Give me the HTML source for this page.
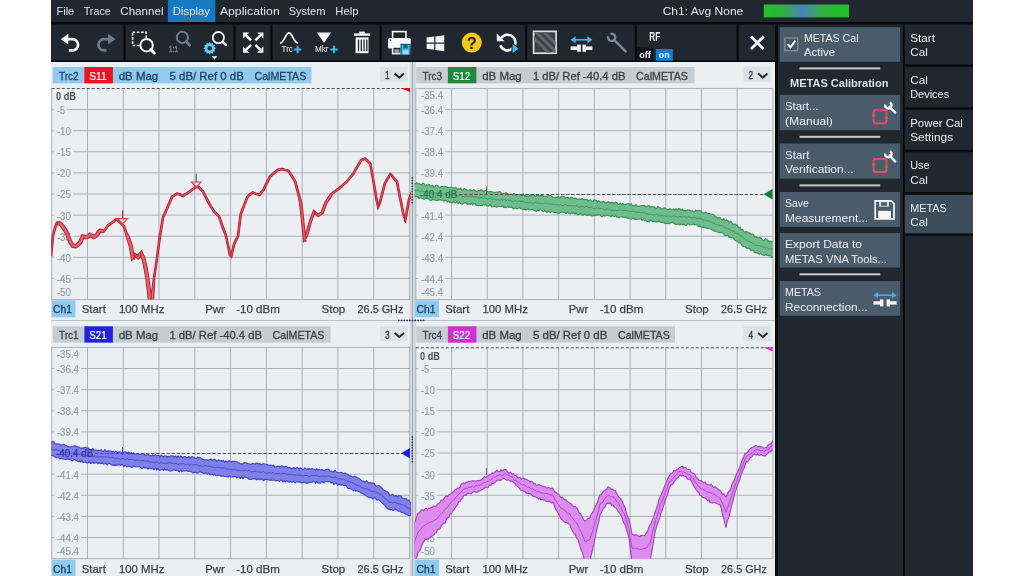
<!DOCTYPE html>
<html><head><meta charset="utf-8"><title>VNA METAS Cal</title>
<style>
html,body{margin:0;padding:0;background:#fff;width:1024px;height:576px;overflow:hidden;}
svg{display:block;font-family:"Liberation Sans", sans-serif;will-change:transform;}
</style></head><body>
<svg width="1024" height="576" viewBox="0 0 1024 576">
<rect x="51.00" y="0.00" width="922.00" height="576.00" fill="#20272e" />
<rect x="167.90" y="0.00" width="47.40" height="22.00" fill="#1878c0" />
<text x="56.60" y="15.40" font-size="11.5" fill="#e4e6e8" textLength="17.60" lengthAdjust="spacingAndGlyphs" >File</text>
<text x="83.70" y="15.40" font-size="11.5" fill="#e4e6e8" textLength="27.10" lengthAdjust="spacingAndGlyphs" >Trace</text>
<text x="120.30" y="15.40" font-size="11.5" fill="#e4e6e8" textLength="43.20" lengthAdjust="spacingAndGlyphs" >Channel</text>
<text x="172.80" y="15.40" font-size="11.5" fill="#e4e6e8" textLength="37.10" lengthAdjust="spacingAndGlyphs" >Display</text>
<text x="219.90" y="15.40" font-size="11.5" fill="#e4e6e8" textLength="59.80" lengthAdjust="spacingAndGlyphs" >Application</text>
<text x="288.80" y="15.40" font-size="11.5" fill="#e4e6e8" textLength="36.50" lengthAdjust="spacingAndGlyphs" >System</text>
<text x="335.30" y="15.40" font-size="11.5" fill="#e4e6e8" textLength="23.20" lengthAdjust="spacingAndGlyphs" >Help</text>
<text x="662.70" y="15.40" font-size="11.5" fill="#e4e6e8" textLength="80.60" lengthAdjust="spacingAndGlyphs" >Ch1: Avg None</text>
<defs><linearGradient id="gbar" x1="0" x2="1" y1="0" y2="0"><stop offset="0" stop-color="#22c02a"/><stop offset="0.22" stop-color="#2fb040"/><stop offset="0.45" stop-color="#4a84b8"/><stop offset="0.7" stop-color="#32b040"/><stop offset="1" stop-color="#20c020"/></linearGradient><clipPath id="cTL"><rect x="51" y="88" width="360" height="211.5"/></clipPath><clipPath id="cTR"><rect x="414.5" y="88" width="358.5" height="211.5"/></clipPath><clipPath id="cBL"><rect x="51" y="347.3" width="360" height="211.5"/></clipPath><clipPath id="cBR"><rect x="414.5" y="347.3" width="358.5" height="211.5"/></clipPath></defs>
<rect x="763.80" y="4.50" width="85.20" height="12.90" fill="url(#gbar)" />
<rect x="51.00" y="22.00" width="922.00" height="2.50" fill="#07090b" />
<rect x="51.00" y="60.50" width="725.00" height="1.50" fill="#07090b" />
<rect x="123.50" y="24.50" width="2.00" height="36.00" fill="#07090b" />
<rect x="233.50" y="24.50" width="2.00" height="36.00" fill="#07090b" />
<rect x="270.50" y="24.50" width="2.00" height="36.00" fill="#07090b" />
<rect x="379.70" y="24.50" width="2.00" height="36.00" fill="#07090b" />
<rect x="525.10" y="24.50" width="2.00" height="36.00" fill="#07090b" />
<rect x="634.80" y="24.50" width="2.00" height="36.00" fill="#07090b" />
<rect x="736.60" y="24.50" width="2.00" height="36.00" fill="#07090b" />
<rect x="775.00" y="24.50" width="3.00" height="551.50" fill="#07090b" />
<rect x="51.00" y="62.00" width="724.00" height="514.00" fill="#eceff2" />
<rect x="409.70" y="62.00" width="6.20" height="514.00" fill="#d3d9de" />
<line x1="412.50" y1="62.00" x2="412.50" y2="576.00" stroke="#a0a8b0" stroke-width="1" />
<line x1="51.00" y1="320.50" x2="775.00" y2="320.50" stroke="#b8c0c8" stroke-width="1" />
<rect x="52.70" y="67.00" width="258.80" height="16.30" fill="#8fcbf0" />
<rect x="84.40" y="67.00" width="28.50" height="16.30" fill="#e8161e" />
<text x="59.00" y="79.80" font-size="11.5" fill="#1e3a58" stroke="#1e3a58" stroke-width="0.3" textLength="19.60" lengthAdjust="spacingAndGlyphs" >Trc2</text>
<text x="89.20" y="79.80" font-size="11.5" fill="#ffffff" stroke="#ffffff" stroke-width="0.2" textLength="17.40" lengthAdjust="spacingAndGlyphs" >S11</text>
<text x="118.70" y="79.80" font-size="11.5" fill="#1e3a58" stroke="#1e3a58" stroke-width="0.3" textLength="39.50" lengthAdjust="spacingAndGlyphs" >dB Mag</text>
<text x="169.50" y="79.80" font-size="11.5" fill="#1e3a58" stroke="#1e3a58" stroke-width="0.3" textLength="74.30" lengthAdjust="spacingAndGlyphs" >5 dB/ Ref 0 dB</text>
<text x="254.50" y="79.80" font-size="11.5" fill="#1e3a58" stroke="#1e3a58" stroke-width="0.3" textLength="51.80" lengthAdjust="spacingAndGlyphs" >CalMETAS</text>
<rect x="379.90" y="66.70" width="27.60" height="15.10" fill="#dce2e7" />
<text x="385.10" y="79.40" font-size="11.5" fill="#3a3f44" stroke="#3a3f44" stroke-width="0.4" textLength="4.60" lengthAdjust="spacingAndGlyphs" >1</text>
<polyline points="394.6,73.6 399.3,77.6 404.0,73.6" fill="none" stroke="#25292d" stroke-width="2"/>
<rect x="416.20" y="67.00" width="278.20" height="16.30" fill="#c5ccd2" />
<rect x="447.90" y="67.00" width="28.50" height="16.30" fill="#1e8a3c" />
<text x="422.50" y="79.80" font-size="11.5" fill="#3a4046" stroke="#3a4046" stroke-width="0.3" textLength="19.60" lengthAdjust="spacingAndGlyphs" >Trc3</text>
<text x="452.70" y="79.80" font-size="11.5" fill="#ffffff" stroke="#ffffff" stroke-width="0.2" textLength="17.40" lengthAdjust="spacingAndGlyphs" >S12</text>
<text x="482.20" y="79.80" font-size="11.5" fill="#3a4046" stroke="#3a4046" stroke-width="0.3" textLength="39.50" lengthAdjust="spacingAndGlyphs" >dB Mag</text>
<text x="533.00" y="79.80" font-size="11.5" fill="#3a4046" stroke="#3a4046" stroke-width="0.3" textLength="92.40" lengthAdjust="spacingAndGlyphs" >1 dB/ Ref -40.4 dB</text>
<text x="636.10" y="79.80" font-size="11.5" fill="#3a4046" stroke="#3a4046" stroke-width="0.3" textLength="51.80" lengthAdjust="spacingAndGlyphs" >CalMETAS</text>
<rect x="743.40" y="66.70" width="27.60" height="15.10" fill="#dce2e7" />
<text x="748.60" y="79.40" font-size="11.5" fill="#3a3f44" stroke="#3a3f44" stroke-width="0.4" textLength="4.60" lengthAdjust="spacingAndGlyphs" >2</text>
<polyline points="758.1,73.6 762.8,77.6 767.5,73.6" fill="none" stroke="#25292d" stroke-width="2"/>
<rect x="52.70" y="326.30" width="277.90" height="16.30" fill="#c5ccd2" />
<rect x="84.40" y="326.30" width="28.50" height="16.30" fill="#2222dd" />
<text x="59.00" y="339.10" font-size="11.5" fill="#3a4046" stroke="#3a4046" stroke-width="0.3" textLength="19.60" lengthAdjust="spacingAndGlyphs" >Trc1</text>
<text x="89.20" y="339.10" font-size="11.5" fill="#ffffff" stroke="#ffffff" stroke-width="0.2" textLength="17.40" lengthAdjust="spacingAndGlyphs" >S21</text>
<text x="118.70" y="339.10" font-size="11.5" fill="#3a4046" stroke="#3a4046" stroke-width="0.3" textLength="39.50" lengthAdjust="spacingAndGlyphs" >dB Mag</text>
<text x="169.50" y="339.10" font-size="11.5" fill="#3a4046" stroke="#3a4046" stroke-width="0.3" textLength="92.40" lengthAdjust="spacingAndGlyphs" >1 dB/ Ref -40.4 dB</text>
<text x="272.60" y="339.10" font-size="11.5" fill="#3a4046" stroke="#3a4046" stroke-width="0.3" textLength="51.80" lengthAdjust="spacingAndGlyphs" >CalMETAS</text>
<rect x="379.90" y="326.00" width="27.60" height="15.10" fill="#dce2e7" />
<text x="385.10" y="338.70" font-size="11.5" fill="#3a3f44" stroke="#3a3f44" stroke-width="0.4" textLength="4.60" lengthAdjust="spacingAndGlyphs" >3</text>
<polyline points="394.6,332.9 399.3,336.9 404.0,332.9" fill="none" stroke="#25292d" stroke-width="2"/>
<rect x="416.20" y="326.30" width="258.80" height="16.30" fill="#c5ccd2" />
<rect x="447.90" y="326.30" width="28.50" height="16.30" fill="#d22ed8" />
<text x="422.50" y="339.10" font-size="11.5" fill="#3a4046" stroke="#3a4046" stroke-width="0.3" textLength="19.60" lengthAdjust="spacingAndGlyphs" >Trc4</text>
<text x="452.70" y="339.10" font-size="11.5" fill="#ffffff" stroke="#ffffff" stroke-width="0.2" textLength="17.40" lengthAdjust="spacingAndGlyphs" >S22</text>
<text x="482.20" y="339.10" font-size="11.5" fill="#3a4046" stroke="#3a4046" stroke-width="0.3" textLength="39.50" lengthAdjust="spacingAndGlyphs" >dB Mag</text>
<text x="533.00" y="339.10" font-size="11.5" fill="#3a4046" stroke="#3a4046" stroke-width="0.3" textLength="74.30" lengthAdjust="spacingAndGlyphs" >5 dB/ Ref 0 dB</text>
<text x="618.00" y="339.10" font-size="11.5" fill="#3a4046" stroke="#3a4046" stroke-width="0.3" textLength="51.80" lengthAdjust="spacingAndGlyphs" >CalMETAS</text>
<rect x="743.40" y="326.00" width="27.60" height="15.10" fill="#dce2e7" />
<text x="748.60" y="338.70" font-size="11.5" fill="#3a3f44" stroke="#3a3f44" stroke-width="0.4" textLength="4.60" lengthAdjust="spacingAndGlyphs" >4</text>
<polyline points="758.1,332.9 762.8,336.9 767.5,332.9" fill="none" stroke="#25292d" stroke-width="2"/>
<rect x="51.50" y="300.40" width="24.00" height="16.90" fill="#8fcbf0" />
<text x="53.00" y="313.20" font-size="11.5" fill="#1e3a58" stroke="#1e3a58" stroke-width="0.3" textLength="19.00" lengthAdjust="spacingAndGlyphs" >Ch1</text>
<text x="81.80" y="313.20" font-size="11.5" fill="#3c4248" stroke="#3c4248" stroke-width="0.25" textLength="24.00" lengthAdjust="spacingAndGlyphs" >Start</text>
<text x="119.00" y="313.20" font-size="11.5" fill="#3c4248" stroke="#3c4248" stroke-width="0.25" textLength="45.40" lengthAdjust="spacingAndGlyphs" >100 MHz</text>
<text x="205.30" y="313.20" font-size="11.5" fill="#3c4248" stroke="#3c4248" stroke-width="0.25" textLength="19.50" lengthAdjust="spacingAndGlyphs" >Pwr</text>
<text x="236.20" y="313.20" font-size="11.5" fill="#3c4248" stroke="#3c4248" stroke-width="0.25" textLength="43.60" lengthAdjust="spacingAndGlyphs" >-10 dBm</text>
<text x="321.50" y="313.20" font-size="11.5" fill="#3c4248" stroke="#3c4248" stroke-width="0.25" textLength="23.70" lengthAdjust="spacingAndGlyphs" >Stop</text>
<text x="357.60" y="313.20" font-size="11.5" fill="#3c4248" stroke="#3c4248" stroke-width="0.25" textLength="45.70" lengthAdjust="spacingAndGlyphs" >26.5 GHz</text>
<rect x="415.00" y="300.40" width="24.00" height="16.90" fill="#8fcbf0" />
<text x="416.50" y="313.20" font-size="11.5" fill="#1e3a58" stroke="#1e3a58" stroke-width="0.3" textLength="19.00" lengthAdjust="spacingAndGlyphs" >Ch1</text>
<text x="445.30" y="313.20" font-size="11.5" fill="#3c4248" stroke="#3c4248" stroke-width="0.25" textLength="24.00" lengthAdjust="spacingAndGlyphs" >Start</text>
<text x="482.50" y="313.20" font-size="11.5" fill="#3c4248" stroke="#3c4248" stroke-width="0.25" textLength="45.40" lengthAdjust="spacingAndGlyphs" >100 MHz</text>
<text x="568.80" y="313.20" font-size="11.5" fill="#3c4248" stroke="#3c4248" stroke-width="0.25" textLength="19.50" lengthAdjust="spacingAndGlyphs" >Pwr</text>
<text x="599.70" y="313.20" font-size="11.5" fill="#3c4248" stroke="#3c4248" stroke-width="0.25" textLength="43.60" lengthAdjust="spacingAndGlyphs" >-10 dBm</text>
<text x="685.00" y="313.20" font-size="11.5" fill="#3c4248" stroke="#3c4248" stroke-width="0.25" textLength="23.70" lengthAdjust="spacingAndGlyphs" >Stop</text>
<text x="721.10" y="313.20" font-size="11.5" fill="#3c4248" stroke="#3c4248" stroke-width="0.25" textLength="45.70" lengthAdjust="spacingAndGlyphs" >26.5 GHz</text>
<rect x="51.50" y="559.70" width="24.00" height="16.90" fill="#8fcbf0" />
<text x="53.00" y="572.50" font-size="11.5" fill="#1e3a58" stroke="#1e3a58" stroke-width="0.3" textLength="19.00" lengthAdjust="spacingAndGlyphs" >Ch1</text>
<text x="81.80" y="572.50" font-size="11.5" fill="#3c4248" stroke="#3c4248" stroke-width="0.25" textLength="24.00" lengthAdjust="spacingAndGlyphs" >Start</text>
<text x="119.00" y="572.50" font-size="11.5" fill="#3c4248" stroke="#3c4248" stroke-width="0.25" textLength="45.40" lengthAdjust="spacingAndGlyphs" >100 MHz</text>
<text x="205.30" y="572.50" font-size="11.5" fill="#3c4248" stroke="#3c4248" stroke-width="0.25" textLength="19.50" lengthAdjust="spacingAndGlyphs" >Pwr</text>
<text x="236.20" y="572.50" font-size="11.5" fill="#3c4248" stroke="#3c4248" stroke-width="0.25" textLength="43.60" lengthAdjust="spacingAndGlyphs" >-10 dBm</text>
<text x="321.50" y="572.50" font-size="11.5" fill="#3c4248" stroke="#3c4248" stroke-width="0.25" textLength="23.70" lengthAdjust="spacingAndGlyphs" >Stop</text>
<text x="357.60" y="572.50" font-size="11.5" fill="#3c4248" stroke="#3c4248" stroke-width="0.25" textLength="45.70" lengthAdjust="spacingAndGlyphs" >26.5 GHz</text>
<rect x="415.00" y="559.70" width="24.00" height="16.90" fill="#8fcbf0" />
<text x="416.50" y="572.50" font-size="11.5" fill="#1e3a58" stroke="#1e3a58" stroke-width="0.3" textLength="19.00" lengthAdjust="spacingAndGlyphs" >Ch1</text>
<text x="445.30" y="572.50" font-size="11.5" fill="#3c4248" stroke="#3c4248" stroke-width="0.25" textLength="24.00" lengthAdjust="spacingAndGlyphs" >Start</text>
<text x="482.50" y="572.50" font-size="11.5" fill="#3c4248" stroke="#3c4248" stroke-width="0.25" textLength="45.40" lengthAdjust="spacingAndGlyphs" >100 MHz</text>
<text x="568.80" y="572.50" font-size="11.5" fill="#3c4248" stroke="#3c4248" stroke-width="0.25" textLength="19.50" lengthAdjust="spacingAndGlyphs" >Pwr</text>
<text x="599.70" y="572.50" font-size="11.5" fill="#3c4248" stroke="#3c4248" stroke-width="0.25" textLength="43.60" lengthAdjust="spacingAndGlyphs" >-10 dBm</text>
<text x="685.00" y="572.50" font-size="11.5" fill="#3c4248" stroke="#3c4248" stroke-width="0.25" textLength="23.70" lengthAdjust="spacingAndGlyphs" >Stop</text>
<text x="721.10" y="572.50" font-size="11.5" fill="#3c4248" stroke="#3c4248" stroke-width="0.25" textLength="45.70" lengthAdjust="spacingAndGlyphs" >26.5 GHz</text>
<line x1="51.70" y1="87.95" x2="51.70" y2="300.05" stroke="#a9b1b9" stroke-width="1" />
<line x1="87.48" y1="87.95" x2="87.48" y2="300.05" stroke="#a9b1b9" stroke-width="1" />
<line x1="123.26" y1="87.95" x2="123.26" y2="300.05" stroke="#a9b1b9" stroke-width="1" />
<line x1="159.04" y1="87.95" x2="159.04" y2="300.05" stroke="#a9b1b9" stroke-width="1" />
<line x1="194.82" y1="87.95" x2="194.82" y2="300.05" stroke="#a9b1b9" stroke-width="1" />
<line x1="230.60" y1="87.95" x2="230.60" y2="300.05" stroke="#a9b1b9" stroke-width="1" />
<line x1="266.38" y1="87.95" x2="266.38" y2="300.05" stroke="#a9b1b9" stroke-width="1" />
<line x1="302.16" y1="87.95" x2="302.16" y2="300.05" stroke="#a9b1b9" stroke-width="1" />
<line x1="337.94" y1="87.95" x2="337.94" y2="300.05" stroke="#a9b1b9" stroke-width="1" />
<line x1="373.72" y1="87.95" x2="373.72" y2="300.05" stroke="#a9b1b9" stroke-width="1" />
<line x1="409.50" y1="87.95" x2="409.50" y2="300.05" stroke="#a9b1b9" stroke-width="1" />
<line x1="51.70" y1="109.56" x2="54.20" y2="109.56" stroke="#a9b1b9" stroke-width="1" />
<line x1="67.10" y1="109.56" x2="409.50" y2="109.56" stroke="#a9b1b9" stroke-width="1" />
<line x1="51.70" y1="130.67" x2="54.20" y2="130.67" stroke="#a9b1b9" stroke-width="1" />
<line x1="73.10" y1="130.67" x2="409.50" y2="130.67" stroke="#a9b1b9" stroke-width="1" />
<line x1="51.70" y1="151.78" x2="54.20" y2="151.78" stroke="#a9b1b9" stroke-width="1" />
<line x1="73.10" y1="151.78" x2="409.50" y2="151.78" stroke="#a9b1b9" stroke-width="1" />
<line x1="51.70" y1="172.89" x2="54.20" y2="172.89" stroke="#a9b1b9" stroke-width="1" />
<line x1="73.10" y1="172.89" x2="409.50" y2="172.89" stroke="#a9b1b9" stroke-width="1" />
<line x1="51.70" y1="194.00" x2="54.20" y2="194.00" stroke="#a9b1b9" stroke-width="1" />
<line x1="73.10" y1="194.00" x2="409.50" y2="194.00" stroke="#a9b1b9" stroke-width="1" />
<line x1="51.70" y1="215.11" x2="54.20" y2="215.11" stroke="#a9b1b9" stroke-width="1" />
<line x1="73.10" y1="215.11" x2="409.50" y2="215.11" stroke="#a9b1b9" stroke-width="1" />
<line x1="51.70" y1="236.22" x2="54.20" y2="236.22" stroke="#a9b1b9" stroke-width="1" />
<line x1="73.10" y1="236.22" x2="409.50" y2="236.22" stroke="#a9b1b9" stroke-width="1" />
<line x1="51.70" y1="257.33" x2="54.20" y2="257.33" stroke="#a9b1b9" stroke-width="1" />
<line x1="73.10" y1="257.33" x2="409.50" y2="257.33" stroke="#a9b1b9" stroke-width="1" />
<line x1="51.70" y1="278.44" x2="54.20" y2="278.44" stroke="#a9b1b9" stroke-width="1" />
<line x1="73.10" y1="278.44" x2="409.50" y2="278.44" stroke="#a9b1b9" stroke-width="1" />
<line x1="51.70" y1="299.55" x2="409.50" y2="299.55" stroke="#a9b1b9" stroke-width="1" />
<text x="56.90" y="113.96" font-size="10.5" fill="#949ca4" stroke="#949ca4" stroke-width="0.15" textLength="8.00" lengthAdjust="spacingAndGlyphs" >-5</text>
<text x="56.90" y="135.07" font-size="10.5" fill="#949ca4" stroke="#949ca4" stroke-width="0.15" textLength="14.00" lengthAdjust="spacingAndGlyphs" >-10</text>
<text x="56.90" y="156.18" font-size="10.5" fill="#949ca4" stroke="#949ca4" stroke-width="0.15" textLength="14.00" lengthAdjust="spacingAndGlyphs" >-15</text>
<text x="56.90" y="177.29" font-size="10.5" fill="#949ca4" stroke="#949ca4" stroke-width="0.15" textLength="14.00" lengthAdjust="spacingAndGlyphs" >-20</text>
<text x="56.90" y="198.40" font-size="10.5" fill="#949ca4" stroke="#949ca4" stroke-width="0.15" textLength="14.00" lengthAdjust="spacingAndGlyphs" >-25</text>
<text x="56.90" y="219.51" font-size="10.5" fill="#949ca4" stroke="#949ca4" stroke-width="0.15" textLength="14.00" lengthAdjust="spacingAndGlyphs" >-30</text>
<text x="56.90" y="240.62" font-size="10.5" fill="#949ca4" stroke="#949ca4" stroke-width="0.15" textLength="14.00" lengthAdjust="spacingAndGlyphs" >-35</text>
<text x="56.90" y="261.73" font-size="10.5" fill="#949ca4" stroke="#949ca4" stroke-width="0.15" textLength="14.00" lengthAdjust="spacingAndGlyphs" >-40</text>
<text x="56.90" y="282.84" font-size="10.5" fill="#949ca4" stroke="#949ca4" stroke-width="0.15" textLength="14.00" lengthAdjust="spacingAndGlyphs" >-45</text>
<text x="56.90" y="296.35" font-size="10.5" fill="#949ca4" stroke="#949ca4" stroke-width="0.15" textLength="14.00" lengthAdjust="spacingAndGlyphs" >-50</text>
<line x1="415.80" y1="87.95" x2="415.80" y2="300.05" stroke="#a9b1b9" stroke-width="1" />
<line x1="451.51" y1="87.95" x2="451.51" y2="300.05" stroke="#a9b1b9" stroke-width="1" />
<line x1="487.22" y1="87.95" x2="487.22" y2="300.05" stroke="#a9b1b9" stroke-width="1" />
<line x1="522.93" y1="87.95" x2="522.93" y2="300.05" stroke="#a9b1b9" stroke-width="1" />
<line x1="558.64" y1="87.95" x2="558.64" y2="300.05" stroke="#a9b1b9" stroke-width="1" />
<line x1="594.35" y1="87.95" x2="594.35" y2="300.05" stroke="#a9b1b9" stroke-width="1" />
<line x1="630.06" y1="87.95" x2="630.06" y2="300.05" stroke="#a9b1b9" stroke-width="1" />
<line x1="665.77" y1="87.95" x2="665.77" y2="300.05" stroke="#a9b1b9" stroke-width="1" />
<line x1="701.48" y1="87.95" x2="701.48" y2="300.05" stroke="#a9b1b9" stroke-width="1" />
<line x1="737.19" y1="87.95" x2="737.19" y2="300.05" stroke="#a9b1b9" stroke-width="1" />
<line x1="772.90" y1="87.95" x2="772.90" y2="300.05" stroke="#a9b1b9" stroke-width="1" />
<line x1="415.80" y1="88.45" x2="772.90" y2="88.45" stroke="#a9b1b9" stroke-width="1" />
<line x1="415.80" y1="109.56" x2="418.30" y2="109.56" stroke="#a9b1b9" stroke-width="1" />
<line x1="445.30" y1="109.56" x2="772.90" y2="109.56" stroke="#a9b1b9" stroke-width="1" />
<line x1="415.80" y1="130.67" x2="418.30" y2="130.67" stroke="#a9b1b9" stroke-width="1" />
<line x1="445.30" y1="130.67" x2="772.90" y2="130.67" stroke="#a9b1b9" stroke-width="1" />
<line x1="415.80" y1="151.78" x2="418.30" y2="151.78" stroke="#a9b1b9" stroke-width="1" />
<line x1="445.30" y1="151.78" x2="772.90" y2="151.78" stroke="#a9b1b9" stroke-width="1" />
<line x1="415.80" y1="172.89" x2="418.30" y2="172.89" stroke="#a9b1b9" stroke-width="1" />
<line x1="445.30" y1="172.89" x2="772.90" y2="172.89" stroke="#a9b1b9" stroke-width="1" />
<line x1="415.80" y1="215.11" x2="418.30" y2="215.11" stroke="#a9b1b9" stroke-width="1" />
<line x1="445.30" y1="215.11" x2="772.90" y2="215.11" stroke="#a9b1b9" stroke-width="1" />
<line x1="415.80" y1="236.22" x2="418.30" y2="236.22" stroke="#a9b1b9" stroke-width="1" />
<line x1="445.30" y1="236.22" x2="772.90" y2="236.22" stroke="#a9b1b9" stroke-width="1" />
<line x1="415.80" y1="257.33" x2="418.30" y2="257.33" stroke="#a9b1b9" stroke-width="1" />
<line x1="445.30" y1="257.33" x2="772.90" y2="257.33" stroke="#a9b1b9" stroke-width="1" />
<line x1="415.80" y1="278.44" x2="418.30" y2="278.44" stroke="#a9b1b9" stroke-width="1" />
<line x1="445.30" y1="278.44" x2="772.90" y2="278.44" stroke="#a9b1b9" stroke-width="1" />
<line x1="415.80" y1="299.55" x2="772.90" y2="299.55" stroke="#a9b1b9" stroke-width="1" />
<text x="421.00" y="99.45" font-size="10.5" fill="#949ca4" stroke="#949ca4" stroke-width="0.15" textLength="22.10" lengthAdjust="spacingAndGlyphs" >-35.4</text>
<text x="421.00" y="113.96" font-size="10.5" fill="#949ca4" stroke="#949ca4" stroke-width="0.15" textLength="22.10" lengthAdjust="spacingAndGlyphs" >-36.4</text>
<text x="421.00" y="135.07" font-size="10.5" fill="#949ca4" stroke="#949ca4" stroke-width="0.15" textLength="22.10" lengthAdjust="spacingAndGlyphs" >-37.4</text>
<text x="421.00" y="156.18" font-size="10.5" fill="#949ca4" stroke="#949ca4" stroke-width="0.15" textLength="22.10" lengthAdjust="spacingAndGlyphs" >-38.4</text>
<text x="421.00" y="177.29" font-size="10.5" fill="#949ca4" stroke="#949ca4" stroke-width="0.15" textLength="22.10" lengthAdjust="spacingAndGlyphs" >-39.4</text>
<text x="421.00" y="219.51" font-size="10.5" fill="#949ca4" stroke="#949ca4" stroke-width="0.15" textLength="22.10" lengthAdjust="spacingAndGlyphs" >-41.4</text>
<text x="421.00" y="240.62" font-size="10.5" fill="#949ca4" stroke="#949ca4" stroke-width="0.15" textLength="22.10" lengthAdjust="spacingAndGlyphs" >-42.4</text>
<text x="421.00" y="261.73" font-size="10.5" fill="#949ca4" stroke="#949ca4" stroke-width="0.15" textLength="22.10" lengthAdjust="spacingAndGlyphs" >-43.4</text>
<text x="421.00" y="282.84" font-size="10.5" fill="#949ca4" stroke="#949ca4" stroke-width="0.15" textLength="22.10" lengthAdjust="spacingAndGlyphs" >-44.4</text>
<text x="421.00" y="296.35" font-size="10.5" fill="#949ca4" stroke="#949ca4" stroke-width="0.15" textLength="22.10" lengthAdjust="spacingAndGlyphs" >-45.4</text>
<line x1="51.70" y1="346.87" x2="51.70" y2="559.17" stroke="#a9b1b9" stroke-width="1" />
<line x1="87.48" y1="346.87" x2="87.48" y2="559.17" stroke="#a9b1b9" stroke-width="1" />
<line x1="123.26" y1="346.87" x2="123.26" y2="559.17" stroke="#a9b1b9" stroke-width="1" />
<line x1="159.04" y1="346.87" x2="159.04" y2="559.17" stroke="#a9b1b9" stroke-width="1" />
<line x1="194.82" y1="346.87" x2="194.82" y2="559.17" stroke="#a9b1b9" stroke-width="1" />
<line x1="230.60" y1="346.87" x2="230.60" y2="559.17" stroke="#a9b1b9" stroke-width="1" />
<line x1="266.38" y1="346.87" x2="266.38" y2="559.17" stroke="#a9b1b9" stroke-width="1" />
<line x1="302.16" y1="346.87" x2="302.16" y2="559.17" stroke="#a9b1b9" stroke-width="1" />
<line x1="337.94" y1="346.87" x2="337.94" y2="559.17" stroke="#a9b1b9" stroke-width="1" />
<line x1="373.72" y1="346.87" x2="373.72" y2="559.17" stroke="#a9b1b9" stroke-width="1" />
<line x1="409.50" y1="346.87" x2="409.50" y2="559.17" stroke="#a9b1b9" stroke-width="1" />
<line x1="51.70" y1="347.37" x2="409.50" y2="347.37" stroke="#a9b1b9" stroke-width="1" />
<line x1="51.70" y1="368.50" x2="54.20" y2="368.50" stroke="#a9b1b9" stroke-width="1" />
<line x1="81.20" y1="368.50" x2="409.50" y2="368.50" stroke="#a9b1b9" stroke-width="1" />
<line x1="51.70" y1="389.63" x2="54.20" y2="389.63" stroke="#a9b1b9" stroke-width="1" />
<line x1="81.20" y1="389.63" x2="409.50" y2="389.63" stroke="#a9b1b9" stroke-width="1" />
<line x1="51.70" y1="410.76" x2="54.20" y2="410.76" stroke="#a9b1b9" stroke-width="1" />
<line x1="81.20" y1="410.76" x2="409.50" y2="410.76" stroke="#a9b1b9" stroke-width="1" />
<line x1="51.70" y1="431.89" x2="54.20" y2="431.89" stroke="#a9b1b9" stroke-width="1" />
<line x1="81.20" y1="431.89" x2="409.50" y2="431.89" stroke="#a9b1b9" stroke-width="1" />
<line x1="51.70" y1="474.15" x2="54.20" y2="474.15" stroke="#a9b1b9" stroke-width="1" />
<line x1="81.20" y1="474.15" x2="409.50" y2="474.15" stroke="#a9b1b9" stroke-width="1" />
<line x1="51.70" y1="495.28" x2="54.20" y2="495.28" stroke="#a9b1b9" stroke-width="1" />
<line x1="81.20" y1="495.28" x2="409.50" y2="495.28" stroke="#a9b1b9" stroke-width="1" />
<line x1="51.70" y1="516.41" x2="54.20" y2="516.41" stroke="#a9b1b9" stroke-width="1" />
<line x1="81.20" y1="516.41" x2="409.50" y2="516.41" stroke="#a9b1b9" stroke-width="1" />
<line x1="51.70" y1="537.54" x2="54.20" y2="537.54" stroke="#a9b1b9" stroke-width="1" />
<line x1="81.20" y1="537.54" x2="409.50" y2="537.54" stroke="#a9b1b9" stroke-width="1" />
<line x1="51.70" y1="558.67" x2="409.50" y2="558.67" stroke="#a9b1b9" stroke-width="1" />
<text x="56.90" y="358.37" font-size="10.5" fill="#949ca4" stroke="#949ca4" stroke-width="0.15" textLength="22.10" lengthAdjust="spacingAndGlyphs" >-35.4</text>
<text x="56.90" y="372.90" font-size="10.5" fill="#949ca4" stroke="#949ca4" stroke-width="0.15" textLength="22.10" lengthAdjust="spacingAndGlyphs" >-36.4</text>
<text x="56.90" y="394.03" font-size="10.5" fill="#949ca4" stroke="#949ca4" stroke-width="0.15" textLength="22.10" lengthAdjust="spacingAndGlyphs" >-37.4</text>
<text x="56.90" y="415.16" font-size="10.5" fill="#949ca4" stroke="#949ca4" stroke-width="0.15" textLength="22.10" lengthAdjust="spacingAndGlyphs" >-38.4</text>
<text x="56.90" y="436.29" font-size="10.5" fill="#949ca4" stroke="#949ca4" stroke-width="0.15" textLength="22.10" lengthAdjust="spacingAndGlyphs" >-39.4</text>
<text x="56.90" y="478.55" font-size="10.5" fill="#949ca4" stroke="#949ca4" stroke-width="0.15" textLength="22.10" lengthAdjust="spacingAndGlyphs" >-41.4</text>
<text x="56.90" y="499.68" font-size="10.5" fill="#949ca4" stroke="#949ca4" stroke-width="0.15" textLength="22.10" lengthAdjust="spacingAndGlyphs" >-42.4</text>
<text x="56.90" y="520.81" font-size="10.5" fill="#949ca4" stroke="#949ca4" stroke-width="0.15" textLength="22.10" lengthAdjust="spacingAndGlyphs" >-43.4</text>
<text x="56.90" y="541.94" font-size="10.5" fill="#949ca4" stroke="#949ca4" stroke-width="0.15" textLength="22.10" lengthAdjust="spacingAndGlyphs" >-44.4</text>
<text x="56.90" y="555.47" font-size="10.5" fill="#949ca4" stroke="#949ca4" stroke-width="0.15" textLength="22.10" lengthAdjust="spacingAndGlyphs" >-45.4</text>
<line x1="415.80" y1="346.87" x2="415.80" y2="559.17" stroke="#a9b1b9" stroke-width="1" />
<line x1="451.51" y1="346.87" x2="451.51" y2="559.17" stroke="#a9b1b9" stroke-width="1" />
<line x1="487.22" y1="346.87" x2="487.22" y2="559.17" stroke="#a9b1b9" stroke-width="1" />
<line x1="522.93" y1="346.87" x2="522.93" y2="559.17" stroke="#a9b1b9" stroke-width="1" />
<line x1="558.64" y1="346.87" x2="558.64" y2="559.17" stroke="#a9b1b9" stroke-width="1" />
<line x1="594.35" y1="346.87" x2="594.35" y2="559.17" stroke="#a9b1b9" stroke-width="1" />
<line x1="630.06" y1="346.87" x2="630.06" y2="559.17" stroke="#a9b1b9" stroke-width="1" />
<line x1="665.77" y1="346.87" x2="665.77" y2="559.17" stroke="#a9b1b9" stroke-width="1" />
<line x1="701.48" y1="346.87" x2="701.48" y2="559.17" stroke="#a9b1b9" stroke-width="1" />
<line x1="737.19" y1="346.87" x2="737.19" y2="559.17" stroke="#a9b1b9" stroke-width="1" />
<line x1="772.90" y1="346.87" x2="772.90" y2="559.17" stroke="#a9b1b9" stroke-width="1" />
<line x1="415.80" y1="368.50" x2="418.30" y2="368.50" stroke="#a9b1b9" stroke-width="1" />
<line x1="431.20" y1="368.50" x2="772.90" y2="368.50" stroke="#a9b1b9" stroke-width="1" />
<line x1="415.80" y1="389.63" x2="418.30" y2="389.63" stroke="#a9b1b9" stroke-width="1" />
<line x1="437.20" y1="389.63" x2="772.90" y2="389.63" stroke="#a9b1b9" stroke-width="1" />
<line x1="415.80" y1="410.76" x2="418.30" y2="410.76" stroke="#a9b1b9" stroke-width="1" />
<line x1="437.20" y1="410.76" x2="772.90" y2="410.76" stroke="#a9b1b9" stroke-width="1" />
<line x1="415.80" y1="431.89" x2="418.30" y2="431.89" stroke="#a9b1b9" stroke-width="1" />
<line x1="437.20" y1="431.89" x2="772.90" y2="431.89" stroke="#a9b1b9" stroke-width="1" />
<line x1="415.80" y1="453.02" x2="418.30" y2="453.02" stroke="#a9b1b9" stroke-width="1" />
<line x1="437.20" y1="453.02" x2="772.90" y2="453.02" stroke="#a9b1b9" stroke-width="1" />
<line x1="415.80" y1="474.15" x2="418.30" y2="474.15" stroke="#a9b1b9" stroke-width="1" />
<line x1="437.20" y1="474.15" x2="772.90" y2="474.15" stroke="#a9b1b9" stroke-width="1" />
<line x1="415.80" y1="495.28" x2="418.30" y2="495.28" stroke="#a9b1b9" stroke-width="1" />
<line x1="437.20" y1="495.28" x2="772.90" y2="495.28" stroke="#a9b1b9" stroke-width="1" />
<line x1="415.80" y1="516.41" x2="418.30" y2="516.41" stroke="#a9b1b9" stroke-width="1" />
<line x1="437.20" y1="516.41" x2="772.90" y2="516.41" stroke="#a9b1b9" stroke-width="1" />
<line x1="415.80" y1="537.54" x2="418.30" y2="537.54" stroke="#a9b1b9" stroke-width="1" />
<line x1="437.20" y1="537.54" x2="772.90" y2="537.54" stroke="#a9b1b9" stroke-width="1" />
<line x1="415.80" y1="558.67" x2="772.90" y2="558.67" stroke="#a9b1b9" stroke-width="1" />
<text x="421.00" y="372.90" font-size="10.5" fill="#949ca4" stroke="#949ca4" stroke-width="0.15" textLength="8.00" lengthAdjust="spacingAndGlyphs" >-5</text>
<text x="421.00" y="394.03" font-size="10.5" fill="#949ca4" stroke="#949ca4" stroke-width="0.15" textLength="14.00" lengthAdjust="spacingAndGlyphs" >-10</text>
<text x="421.00" y="415.16" font-size="10.5" fill="#949ca4" stroke="#949ca4" stroke-width="0.15" textLength="14.00" lengthAdjust="spacingAndGlyphs" >-15</text>
<text x="421.00" y="436.29" font-size="10.5" fill="#949ca4" stroke="#949ca4" stroke-width="0.15" textLength="14.00" lengthAdjust="spacingAndGlyphs" >-20</text>
<text x="421.00" y="457.42" font-size="10.5" fill="#949ca4" stroke="#949ca4" stroke-width="0.15" textLength="14.00" lengthAdjust="spacingAndGlyphs" >-25</text>
<text x="421.00" y="478.55" font-size="10.5" fill="#949ca4" stroke="#949ca4" stroke-width="0.15" textLength="14.00" lengthAdjust="spacingAndGlyphs" >-30</text>
<text x="421.00" y="499.68" font-size="10.5" fill="#949ca4" stroke="#949ca4" stroke-width="0.15" textLength="14.00" lengthAdjust="spacingAndGlyphs" >-35</text>
<text x="421.00" y="520.81" font-size="10.5" fill="#949ca4" stroke="#949ca4" stroke-width="0.15" textLength="14.00" lengthAdjust="spacingAndGlyphs" >-40</text>
<text x="421.00" y="541.94" font-size="10.5" fill="#949ca4" stroke="#949ca4" stroke-width="0.15" textLength="14.00" lengthAdjust="spacingAndGlyphs" >-45</text>
<text x="421.00" y="555.47" font-size="10.5" fill="#949ca4" stroke="#949ca4" stroke-width="0.15" textLength="14.00" lengthAdjust="spacingAndGlyphs" >-50</text>
<line x1="51.70" y1="88.50" x2="409.50" y2="88.50" stroke="#4c545c" stroke-width="1" stroke-dasharray="3 2"/>
<text x="56.10" y="100.30" font-size="10" fill="#4a5056" font-weight="bold" textLength="19.90" lengthAdjust="spacingAndGlyphs" >0 dB</text>
<polygon points="400.2,88 410,88 410,92" fill="#e01018"/>
<line x1="415.80" y1="347.80" x2="772.90" y2="347.80" stroke="#4c545c" stroke-width="1" stroke-dasharray="3 2"/>
<text x="420.00" y="359.60" font-size="10" fill="#4a5056" font-weight="bold" textLength="19.90" lengthAdjust="spacingAndGlyphs" >0 dB</text>
<polygon points="763.5,347.3 772.5,347.3 772.5,351.5" fill="#d030d8"/>
<g clip-path="url(#cTR)">
<polygon points="413.0,182.0 414.2,183.8 415.4,183.8 416.6,182.8 417.9,183.6 419.1,183.7 420.3,184.3 421.5,184.8 422.7,183.4 423.9,183.5 425.1,185.5 426.4,184.8 427.6,185.7 428.8,184.2 430.0,185.4 431.2,186.1 432.5,185.2 433.7,186.9 434.9,187.0 436.2,185.2 437.4,185.3 438.6,186.6 439.9,187.6 441.1,186.6 442.4,186.3 443.6,186.9 444.8,186.2 446.1,186.8 447.3,187.4 448.5,187.7 449.8,187.3 451.0,187.4 452.2,187.5 453.4,188.1 454.6,187.9 455.8,187.4 457.0,189.3 458.2,188.8 459.4,189.1 460.6,188.2 461.8,190.1 463.0,189.9 464.2,188.4 465.4,189.0 466.6,189.9 467.8,190.0 469.0,190.6 470.2,189.6 471.4,190.6 472.6,190.4 473.8,189.7 475.0,190.4 476.2,191.2 477.4,191.2 478.6,190.5 479.8,190.8 481.0,189.7 482.2,190.3 483.4,191.6 484.6,190.9 485.8,190.5 487.0,191.4 488.2,191.9 489.4,191.9 490.6,191.4 491.8,191.7 493.0,192.0 494.2,192.7 495.4,192.2 496.7,192.1 497.9,192.4 499.1,191.5 500.3,191.7 501.5,193.3 502.7,194.0 503.9,193.3 505.1,193.0 506.3,192.6 507.5,193.5 508.7,194.7 509.9,194.3 511.1,193.9 512.3,194.8 513.6,193.5 514.8,194.3 516.0,195.4 517.2,194.7 518.4,194.5 519.6,194.2 520.8,195.0 522.0,196.0 523.2,194.0 524.4,195.7 525.6,195.9 526.8,196.1 528.0,195.8 529.2,196.0 530.4,195.4 531.6,195.6 532.8,195.3 534.0,194.6 535.2,196.4 536.4,195.8 537.6,195.1 538.8,195.8 540.0,195.8 541.2,195.6 542.4,195.6 543.6,196.1 544.8,196.3 546.0,196.4 547.2,196.1 548.4,195.2 549.6,195.7 550.8,195.6 552.0,196.6 553.2,197.3 554.4,197.2 555.6,197.2 556.8,197.3 558.0,196.2 559.2,197.6 560.4,197.4 561.6,196.2 562.8,196.2 564.0,196.3 565.2,198.1 566.4,197.2 567.6,197.0 568.8,198.3 570.0,197.8 571.2,197.3 572.4,197.7 573.6,198.6 574.8,198.0 576.0,198.4 577.2,199.5 578.4,199.0 579.6,198.9 580.8,199.4 582.0,198.5 583.2,199.5 584.4,199.7 585.6,199.3 586.8,199.3 588.0,201.2 589.2,200.4 590.4,199.9 591.6,200.9 592.8,201.6 594.0,199.9 595.2,200.1 596.4,200.5 597.6,201.8 598.8,200.7 600.0,202.0 601.2,202.1 602.4,201.9 603.6,201.3 604.8,203.1 606.0,202.8 607.2,202.3 608.4,201.8 609.6,202.8 610.8,202.4 612.0,202.9 613.2,202.5 614.4,203.3 615.6,202.1 616.8,202.8 618.0,204.4 619.2,204.3 620.4,203.1 621.6,204.5 622.8,203.4 624.0,204.9 625.2,204.6 626.4,204.0 627.6,203.7 628.8,203.3 630.0,205.3 631.2,203.6 632.4,205.5 633.6,205.9 634.8,205.2 636.0,204.5 637.2,206.1 638.4,206.5 639.7,206.1 640.9,205.8 642.1,205.6 643.3,205.7 644.5,205.5 645.7,206.7 646.9,206.3 648.1,205.9 649.3,205.8 650.5,207.2 651.7,206.5 652.9,207.1 654.1,206.9 655.3,208.2 656.6,208.4 657.8,206.6 659.0,207.2 660.2,207.6 661.4,209.2 662.6,208.8 663.8,208.0 665.0,207.9 666.2,209.0 667.5,209.4 668.7,209.7 670.0,208.5 671.2,209.8 672.4,209.5 673.7,209.1 674.9,210.3 676.2,208.8 677.4,210.0 678.6,208.6 679.9,208.9 681.1,210.7 682.4,209.2 683.6,210.5 684.8,210.3 686.1,210.9 687.3,209.9 688.6,210.0 689.8,210.0 691.0,211.3 692.3,210.8 693.5,211.7 694.8,211.7 696.0,210.1 697.2,211.2 698.4,210.4 699.6,210.5 700.8,210.8 702.0,212.8 703.2,212.8 704.4,213.1 705.6,212.2 706.8,213.0 708.0,213.6 709.2,213.3 710.4,214.2 711.6,214.0 712.8,214.2 714.0,215.1 715.2,217.0 716.4,216.8 717.6,218.1 718.8,217.6 720.0,217.7 721.3,219.4 722.6,220.0 723.9,218.7 725.2,220.7 726.5,219.9 727.8,220.5 729.1,222.7 730.4,221.3 731.7,222.3 733.0,224.5 734.2,224.0 735.4,224.1 736.6,225.0 737.8,226.0 739.0,227.9 740.2,227.2 741.4,229.8 742.6,229.4 743.8,231.5 745.0,232.2 746.2,231.4 747.4,232.0 748.6,233.1 749.8,232.9 751.0,234.7 752.2,234.0 753.4,234.5 754.6,237.3 755.8,236.4 757.0,237.7 758.2,237.7 759.4,237.7 760.6,237.4 761.9,239.6 763.1,240.0 764.3,240.3 765.5,238.7 766.7,239.3 767.9,240.5 769.1,241.6 770.4,240.9 771.6,241.5 772.8,241.8 774.0,241.2 774.0,256.6 772.8,257.5 771.6,257.1 770.4,255.4 769.1,256.0 767.9,255.0 766.7,255.6 765.5,254.5 764.3,255.5 763.1,255.0 761.9,254.6 760.6,253.2 759.4,254.2 758.2,253.4 757.0,252.8 755.8,252.5 754.6,252.6 753.4,250.3 752.2,250.1 751.0,250.8 749.8,248.7 748.6,248.1 747.4,248.4 746.2,247.9 745.0,246.7 743.8,246.5 742.6,246.2 741.4,244.4 740.2,242.5 739.0,243.0 737.8,241.5 736.6,240.8 735.4,240.7 734.2,239.4 733.0,237.5 731.7,237.8 730.4,237.2 729.1,237.4 727.8,235.3 726.5,235.5 725.2,235.6 723.9,234.6 722.6,233.0 721.3,232.6 720.0,232.5 718.8,232.6 717.6,232.0 716.4,231.8 715.2,231.2 714.0,231.2 712.8,230.1 711.6,229.6 710.4,228.7 709.2,228.8 708.0,228.4 706.8,228.1 705.6,228.0 704.4,227.2 703.2,227.4 702.0,227.4 700.8,226.8 699.6,226.1 698.4,226.4 697.2,225.1 696.0,224.8 694.8,224.7 693.5,223.7 692.3,224.5 691.0,224.7 689.8,224.9 688.6,223.8 687.3,224.0 686.1,225.4 684.8,224.8 683.6,224.0 682.4,224.9 681.1,224.0 679.9,225.0 678.6,223.9 677.4,224.5 676.2,224.6 674.9,223.9 673.7,223.1 672.4,222.4 671.2,222.7 670.0,223.1 668.7,223.6 667.5,223.1 666.2,223.5 665.0,223.6 663.8,222.6 662.6,222.2 661.4,222.4 660.2,222.2 659.0,221.0 657.8,222.0 656.6,221.5 655.3,221.6 654.1,221.0 652.9,221.4 651.7,221.1 650.5,220.1 649.3,221.8 648.1,221.2 646.9,221.4 645.7,220.3 644.5,220.6 643.3,219.1 642.1,220.4 640.9,218.7 639.7,218.9 638.4,219.0 637.2,219.2 636.0,219.5 634.8,219.5 633.6,218.5 632.4,218.4 631.2,219.2 630.0,218.7 628.8,218.5 627.6,218.2 626.4,217.2 625.2,217.8 624.0,217.0 622.8,217.5 621.6,216.8 620.4,216.6 619.2,217.8 618.0,217.2 616.8,217.2 615.6,215.7 614.4,216.6 613.2,215.9 612.0,215.4 610.8,216.9 609.6,215.7 608.4,215.8 607.2,215.3 606.0,215.8 604.8,216.1 603.6,215.0 602.4,216.7 601.2,216.5 600.0,214.7 598.8,215.0 597.6,214.6 596.4,215.1 595.2,215.8 594.0,214.7 592.8,215.9 591.6,215.8 590.4,214.6 589.2,215.1 588.0,214.9 586.8,215.2 585.6,215.0 584.4,213.5 583.2,215.2 582.0,215.0 580.8,213.5 579.6,214.2 578.4,214.5 577.2,214.8 576.0,212.6 574.8,214.1 573.6,212.7 572.4,213.4 571.2,213.0 570.0,213.7 568.8,213.5 567.6,212.0 566.4,213.5 565.2,213.0 564.0,212.1 562.8,212.1 561.6,211.9 560.4,212.6 559.2,213.4 558.0,213.2 556.8,213.0 555.6,212.3 554.4,212.5 553.2,212.3 552.0,211.5 550.8,212.4 549.6,212.0 548.4,211.0 547.2,212.2 546.0,211.8 544.8,210.3 543.6,211.8 542.4,210.9 541.2,209.8 540.0,209.7 538.8,210.9 537.6,209.9 536.4,211.2 535.2,211.1 534.0,210.2 532.8,209.8 531.6,209.3 530.4,209.7 529.2,209.6 528.0,209.0 526.8,209.9 525.6,209.7 524.4,209.1 523.2,209.4 522.0,209.0 520.8,208.9 519.6,207.7 518.4,208.1 517.2,208.8 516.0,208.2 514.8,208.1 513.6,208.9 512.3,207.5 511.1,207.1 509.9,207.0 508.7,207.4 507.5,206.6 506.3,207.6 505.1,207.1 503.9,207.5 502.7,206.0 501.5,206.4 500.3,206.5 499.1,206.5 497.9,206.5 496.7,207.2 495.4,206.4 494.2,206.3 493.0,206.8 491.8,207.0 490.6,204.9 489.4,205.2 488.2,206.0 487.0,206.0 485.8,204.6 484.6,205.1 483.4,204.4 482.2,205.5 481.0,205.5 479.8,205.5 478.6,205.6 477.4,205.2 476.2,205.3 475.0,203.9 473.8,203.2 472.6,205.0 471.4,203.2 470.2,204.7 469.0,203.3 467.8,204.6 466.6,203.5 465.4,202.5 464.2,202.9 463.0,203.9 461.8,204.1 460.6,203.5 459.4,202.1 458.2,203.7 457.0,201.7 455.8,203.1 454.6,202.4 453.4,201.5 452.2,202.9 451.0,202.0 449.8,202.5 448.5,201.2 447.3,201.9 446.1,200.5 444.8,200.3 443.6,201.2 442.4,200.0 441.1,200.3 439.9,199.6 438.6,200.0 437.4,200.6 436.2,200.4 434.9,200.2 433.7,199.6 432.5,199.4 431.2,200.5 430.0,200.3 428.8,198.9 427.6,198.7 426.4,198.4 425.1,198.4 423.9,199.4 422.7,198.5 421.5,198.3 420.3,197.7 419.1,198.6 417.9,196.9 416.6,196.2 415.4,196.4 414.2,196.3 413.0,196.6" fill="#70bc8c" stroke="#3a9058" stroke-width="1.15" stroke-linejoin="round"/>
<polyline points="413.0,189.2 414.2,190.6 415.4,190.4 416.6,190.8 417.9,189.7 419.1,191.3 420.3,191.1 421.5,190.8 422.7,191.2 423.9,191.9 425.1,192.1 426.4,191.4 427.6,192.3 428.8,191.8 430.0,193.2 431.2,192.6 432.5,193.4 433.7,193.3 434.9,193.3 436.2,192.9 437.4,193.4 438.6,193.0 439.9,193.1 441.1,194.2 442.4,193.8 443.6,194.5 444.8,193.9 446.1,194.7 447.3,194.9 448.5,194.4 449.8,194.2 451.0,194.8 452.2,195.1 453.4,194.6 454.6,194.9 455.8,194.8 457.0,195.7 458.2,196.3 459.4,195.4 460.6,195.2 461.8,196.3 463.0,196.6 464.2,197.0 465.4,196.5 466.6,196.2 467.8,197.1 469.0,196.1 470.2,197.1 471.4,196.3 472.6,196.9 473.8,197.1 475.0,197.1 476.2,196.9 477.4,197.1 478.6,198.1 479.8,197.7 481.0,198.0 482.2,197.5 483.4,198.4 484.6,197.9 485.8,198.4 487.0,199.0 488.2,199.3 489.4,197.9 490.6,199.2 491.8,199.4 493.0,198.7 494.2,199.0 495.4,199.4 496.7,200.0 497.9,199.4 499.1,200.2 500.3,200.2 501.5,199.4 502.7,200.7 503.9,199.4 505.1,199.7 506.3,200.6 507.5,199.8 508.7,200.4 509.9,200.2 511.1,200.8 512.3,201.5 513.6,201.8 514.8,200.5 516.0,200.7 517.2,202.0 518.4,200.9 519.6,201.4 520.8,201.3 522.0,201.4 523.2,201.4 524.4,202.4 525.6,202.6 526.8,202.6 528.0,202.9 529.2,202.8 530.4,202.4 531.6,202.9 532.8,203.5 534.0,203.1 535.2,202.5 536.4,202.3 537.6,203.8 538.8,203.3 540.0,203.0 541.2,203.5 542.4,203.5 543.6,203.5 544.8,202.9 546.0,203.4 547.2,203.6 548.4,203.4 549.6,204.5 550.8,203.9 552.0,204.3 553.2,204.5 554.4,204.6 555.6,204.7 556.8,204.8 558.0,204.1 559.2,205.4 560.4,204.2 561.6,205.5 562.8,205.5 564.0,205.6 565.2,204.5 566.4,204.7 567.6,205.9 568.8,205.5 570.0,205.5 571.2,206.5 572.4,205.2 573.6,206.1 574.8,206.0 576.0,205.7 577.2,206.2 578.4,206.8 579.6,207.2 580.8,206.0 582.0,206.9 583.2,206.3 584.4,207.5 585.6,206.5 586.8,206.6 588.0,207.2 589.2,207.9 590.4,207.4 591.6,207.2 592.8,208.3 594.0,208.5 595.2,208.7 596.4,207.9 597.6,208.2 598.8,208.0 600.0,208.6 601.2,208.4 602.4,208.5 603.6,209.3 604.8,209.7 606.0,209.2 607.2,208.6 608.4,209.5 609.6,209.3 610.8,210.3 612.0,210.0 613.2,210.2 614.4,210.2 615.6,210.0 616.8,210.7 618.0,210.7 619.2,210.0 620.4,209.9 621.6,210.3 622.8,210.6 624.0,210.1 625.2,210.6 626.4,211.0 627.6,210.3 628.8,211.6 630.0,211.5 631.2,211.1 632.4,211.2 633.6,211.5 634.8,211.6 636.0,212.4 637.2,212.2 638.4,212.4 639.7,212.0 640.9,213.3 642.1,212.5 643.3,212.7 644.5,212.4 645.7,214.0 646.9,213.4 648.1,214.2 649.3,214.4 650.5,214.6 651.7,214.5 652.9,214.9 654.1,215.0 655.3,215.0 656.6,214.1 657.8,214.9 659.0,215.1 660.2,215.9 661.4,215.7 662.6,215.8 663.8,216.0 665.0,215.5 666.2,216.5 667.5,216.1 668.7,215.9 670.0,216.0 671.2,216.9 672.4,216.3 673.7,215.9 674.9,215.9 676.2,216.8 677.4,216.7 678.6,217.3 679.9,216.3 681.1,216.8 682.4,217.3 683.6,216.4 684.8,216.5 686.1,217.3 687.3,217.0 688.6,216.8 689.8,217.1 691.0,217.8 692.3,217.7 693.5,217.1 694.8,217.2 696.0,218.5 697.2,218.4 698.4,218.0 699.6,219.3 700.8,218.3 702.0,219.0 703.2,220.0 704.4,220.1 705.6,219.7 706.8,220.9 708.0,220.7 709.2,221.6 710.4,222.1 711.6,221.8 712.8,222.7 714.0,223.0 715.2,224.1 716.4,224.3 717.6,224.7 718.8,225.3 720.0,226.0 721.3,225.4 722.6,225.9 723.9,227.3 725.2,227.9 726.5,228.1 727.8,228.7 729.1,229.1 730.4,230.4 731.7,230.8 733.0,231.1 734.2,231.1 735.4,233.1 736.6,233.3 737.8,233.7 739.0,234.7 740.2,236.1 741.4,235.9 742.6,236.9 743.8,238.0 745.0,239.7 746.2,240.1 747.4,241.0 748.6,241.0 749.8,241.7 751.0,242.3 752.2,242.8 753.4,243.5 754.6,244.5 755.8,245.4 757.0,245.2 758.2,245.8 759.4,245.6 760.6,245.9 761.9,246.5 763.1,246.9 764.3,247.1 765.5,248.1 766.7,247.1 767.9,248.1 769.1,249.0 770.4,248.8 771.6,248.9 772.8,248.9 774.0,249.2" fill="none" stroke="#3a9058" stroke-width="0.9"/>
</g>
<line x1="459.00" y1="194.50" x2="772.00" y2="194.50" stroke="#4c545c" stroke-width="1.2" stroke-dasharray="3.5 1.6"/>
<text x="420.00" y="198.00" font-size="10.5" fill="#2a7045" stroke="#2a7045" stroke-width="0.2" textLength="37.30" lengthAdjust="spacingAndGlyphs" >-40.4 dB</text>
<polygon points="763.5,194.3 772.5,189 772.5,199.6" fill="#1a7a3a"/>
<g clip-path="url(#cBL)">
<polygon points="50.0,442.6 51.2,442.9 52.5,441.3 53.8,441.8 55.0,443.8 56.2,443.9 57.5,444.1 58.8,443.7 60.0,444.7 61.2,444.9 62.4,445.0 63.7,444.3 64.9,445.1 66.1,445.2 67.3,446.1 68.5,446.9 69.7,447.0 71.0,446.3 72.2,446.2 73.4,446.0 74.6,445.7 75.8,445.9 77.0,447.0 78.3,446.9 79.5,447.2 80.7,448.5 81.9,447.9 83.1,448.1 84.3,447.6 85.6,447.3 86.8,448.2 88.0,448.0 89.2,448.9 90.4,450.1 91.6,449.5 92.8,448.5 94.0,450.2 95.2,450.1 96.4,450.1 97.6,450.6 98.8,450.4 100.0,450.6 101.2,449.7 102.4,451.2 103.6,451.3 104.8,449.7 106.0,451.1 107.2,451.1 108.4,450.7 109.6,450.9 110.8,451.0 112.0,452.1 113.2,451.2 114.4,452.1 115.6,451.2 116.8,452.4 118.0,452.6 119.2,451.7 120.4,452.1 121.6,453.0 122.8,452.7 124.0,452.3 125.2,451.8 126.4,452.2 127.6,453.1 128.8,452.1 130.0,453.8 131.2,452.5 132.4,454.1 133.6,452.9 134.8,454.4 136.0,454.0 137.2,453.7 138.4,453.8 139.6,454.2 140.8,454.2 142.0,453.7 143.2,453.6 144.4,454.4 145.6,455.5 146.8,454.9 148.0,453.8 149.2,455.6 150.4,455.5 151.6,456.0 152.8,454.6 154.0,455.9 155.2,454.5 156.4,456.0 157.6,455.3 158.8,455.3 160.0,456.8 161.2,455.2 162.4,456.2 163.6,457.0 164.8,455.7 166.0,455.7 167.2,457.2 168.4,456.3 169.7,457.0 170.9,455.5 172.1,456.3 173.3,456.0 174.5,457.1 175.7,455.9 176.9,457.9 178.1,455.9 179.3,457.5 180.5,456.0 181.7,456.6 182.9,457.9 184.1,456.5 185.3,456.6 186.6,457.8 187.8,457.2 189.0,456.5 190.2,458.6 191.4,456.8 192.6,456.7 193.8,457.4 195.0,458.1 196.2,458.5 197.5,457.2 198.7,457.9 199.9,457.4 201.2,458.4 202.4,459.3 203.6,459.4 204.9,459.9 206.1,459.7 207.3,460.1 208.6,459.9 209.8,459.5 211.0,459.1 212.3,460.2 213.5,459.6 214.7,459.3 216.0,460.2 217.2,461.3 218.4,459.8 219.7,460.9 220.9,460.6 222.1,461.1 223.4,460.4 224.6,462.3 225.8,460.9 227.1,461.8 228.3,461.6 229.5,460.8 230.8,462.2 232.0,461.4 233.2,461.3 234.4,461.4 235.6,461.7 236.9,461.7 238.1,463.0 239.3,462.8 240.5,463.9 241.7,463.9 242.9,464.2 244.1,462.6 245.4,463.1 246.6,462.8 247.8,463.7 249.0,463.8 250.2,464.3 251.4,464.2 252.6,463.3 253.9,463.8 255.1,464.1 256.3,463.0 257.5,463.2 258.7,464.1 259.9,463.6 261.1,465.0 262.4,464.0 263.6,463.8 264.8,464.1 266.0,464.3 267.2,464.4 268.4,465.2 269.6,465.2 270.9,465.0 272.1,465.9 273.3,465.1 274.5,466.7 275.7,467.0 276.9,466.6 278.1,466.1 279.4,466.4 280.6,466.7 281.8,465.7 283.0,466.6 284.2,467.0 285.4,466.4 286.6,466.3 287.9,468.0 289.1,467.2 290.3,467.7 291.5,468.7 292.7,468.1 293.9,467.6 295.1,469.2 296.4,468.0 297.6,467.4 298.8,469.0 300.0,467.8 301.2,468.3 302.4,469.6 303.6,469.3 304.8,467.9 306.0,468.9 307.2,468.9 308.4,469.1 309.6,468.6 310.8,469.5 312.0,468.4 313.2,469.0 314.4,469.2 315.6,470.5 316.8,468.7 318.0,470.3 319.2,469.1 320.4,470.0 321.6,469.7 322.8,469.9 324.0,470.6 325.2,469.9 326.4,469.4 327.6,469.4 328.8,469.4 330.0,471.2 331.2,471.0 332.5,471.9 333.8,471.6 335.0,470.4 336.2,472.0 337.5,472.6 338.8,472.7 340.0,472.5 341.2,472.4 342.5,472.9 343.8,473.9 345.0,473.0 346.4,474.0 347.8,474.3 349.2,475.8 350.6,475.8 352.0,476.6 353.3,476.9 354.6,476.3 355.9,476.7 357.2,477.9 358.5,478.0 359.8,478.9 361.1,480.1 362.4,481.2 363.7,481.0 365.0,482.1 366.3,480.9 367.6,481.9 368.9,483.7 370.2,482.3 371.5,483.3 372.8,482.9 374.1,483.4 375.4,485.6 376.7,486.2 378.0,485.8 379.2,485.6 380.4,486.8 381.6,487.6 382.8,489.4 384.0,490.3 385.2,490.7 386.4,491.8 387.6,491.8 388.8,493.6 390.0,495.4 391.2,495.3 392.4,494.2 393.6,495.4 394.8,496.2 396.0,495.5 397.3,496.7 398.7,495.5 400.0,495.8 401.2,496.0 402.4,498.1 403.7,498.5 404.9,498.8 406.1,498.7 407.3,500.1 408.6,500.0 409.8,502.1 411.0,503.5 411.0,515.6 409.8,515.7 408.6,515.4 407.3,514.7 406.1,514.4 404.9,513.8 403.7,512.6 402.4,512.2 401.2,512.5 400.0,511.0 398.7,511.3 397.3,510.4 396.0,509.4 394.8,508.6 393.6,510.5 392.4,510.2 391.2,509.3 390.0,509.9 388.8,509.1 387.6,508.6 386.4,507.5 385.2,505.6 384.0,504.6 382.8,503.6 381.6,502.3 380.4,501.4 379.2,500.0 378.0,499.9 376.7,499.9 375.4,497.9 374.1,497.6 372.8,498.8 371.5,497.5 370.2,497.6 368.9,497.5 367.6,497.0 366.3,496.1 365.0,495.1 363.7,494.2 362.4,493.2 361.1,492.9 359.8,492.1 358.5,491.5 357.2,490.9 355.9,491.0 354.6,489.6 353.3,490.6 352.0,489.6 350.6,488.6 349.2,488.6 347.8,488.2 346.4,486.0 345.0,485.0 343.8,485.7 342.5,484.6 341.2,485.2 340.0,484.8 338.8,483.9 337.5,485.1 336.2,482.9 335.0,483.9 333.8,484.3 332.5,482.1 331.2,483.1 330.0,481.6 328.8,481.7 327.6,482.0 326.4,481.5 325.2,481.3 324.0,483.0 322.8,481.9 321.6,481.4 320.4,483.2 319.2,482.7 318.0,483.2 316.8,481.5 315.6,483.3 314.4,481.4 313.2,481.2 312.0,482.3 310.8,482.0 309.6,482.1 308.4,482.9 307.2,483.2 306.0,483.2 304.8,482.2 303.6,482.3 302.4,482.3 301.2,482.9 300.0,481.7 298.8,482.3 297.6,481.9 296.4,481.7 295.1,482.9 293.9,481.5 292.7,481.9 291.5,482.2 290.3,481.2 289.1,482.2 287.9,481.5 286.6,480.5 285.4,481.9 284.2,481.1 283.0,481.9 281.8,480.3 280.6,480.1 279.4,481.5 278.1,480.6 276.9,480.5 275.7,481.0 274.5,480.1 273.3,480.0 272.1,480.2 270.9,479.9 269.6,480.2 268.4,479.8 267.2,479.6 266.0,479.4 264.8,479.2 263.6,480.9 262.4,479.4 261.1,478.9 259.9,479.9 258.7,479.0 257.5,479.1 256.3,479.9 255.1,478.5 253.9,479.0 252.6,478.6 251.4,479.2 250.2,479.4 249.0,479.3 247.8,478.0 246.6,477.8 245.4,477.0 244.1,477.1 242.9,478.8 241.7,476.9 240.5,478.4 239.3,477.3 238.1,476.9 236.9,478.1 235.6,476.3 234.4,476.6 233.2,476.4 232.0,477.0 230.8,476.7 229.5,475.8 228.3,477.2 227.1,476.6 225.8,476.8 224.6,476.5 223.4,476.1 222.1,475.9 220.9,476.2 219.7,475.5 218.4,475.0 217.2,475.7 216.0,475.5 214.7,474.2 213.5,475.1 212.3,474.0 211.0,474.3 209.8,474.6 208.6,473.2 207.3,474.2 206.1,473.1 204.9,473.0 203.6,473.5 202.4,472.3 201.2,472.3 199.9,471.8 198.7,472.2 197.5,473.3 196.2,472.6 195.0,472.0 193.8,472.9 192.6,472.8 191.4,471.4 190.2,471.6 189.0,470.9 187.8,471.4 186.6,470.5 185.3,471.0 184.1,471.0 182.9,470.9 181.7,471.8 180.5,470.1 179.3,471.9 178.1,470.3 176.9,470.1 175.7,470.5 174.5,469.9 173.3,470.0 172.1,470.6 170.9,470.9 169.7,470.9 168.4,470.1 167.2,469.7 166.0,470.2 164.8,468.9 163.6,470.4 162.4,469.4 161.2,469.8 160.0,470.1 158.8,469.6 157.6,468.7 156.4,469.8 155.2,468.0 154.0,469.7 152.8,468.8 151.6,468.5 150.4,468.8 149.2,467.9 148.0,469.0 146.8,468.0 145.6,467.7 144.4,467.9 143.2,467.4 142.0,468.6 140.8,467.6 139.6,466.3 138.4,466.8 137.2,467.0 136.0,466.7 134.8,466.1 133.6,466.0 132.4,467.4 131.2,467.2 130.0,466.8 128.8,466.1 127.6,466.8 126.4,466.6 125.2,465.2 124.0,466.4 122.8,464.8 121.6,464.5 120.4,465.4 119.2,464.8 118.0,464.8 116.8,465.5 115.6,464.9 114.4,465.4 113.2,465.1 112.0,465.3 110.8,464.4 109.6,463.3 108.4,463.3 107.2,465.1 106.0,463.4 104.8,463.8 103.6,463.9 102.4,463.1 101.2,463.4 100.0,463.6 98.8,462.5 97.6,463.8 96.4,462.4 95.2,463.1 94.0,463.3 92.8,462.0 91.6,463.1 90.4,463.1 89.2,461.4 88.0,463.0 86.8,462.9 85.6,462.1 84.3,462.2 83.1,462.4 81.9,460.2 80.7,461.8 79.5,461.3 78.3,461.6 77.0,461.0 75.8,460.3 74.6,459.1 73.4,460.3 72.2,460.9 71.0,460.0 69.7,459.2 68.5,459.5 67.3,458.5 66.1,459.7 64.9,459.3 63.7,458.9 62.4,458.9 61.2,457.8 60.0,459.0 58.8,457.6 57.5,457.7 56.2,457.8 55.0,457.0 53.8,455.9 52.5,455.7 51.2,455.4 50.0,454.3" fill="#8080ea" stroke="#4646c0" stroke-width="1.15" stroke-linejoin="round"/>
<polyline points="50.0,447.6 51.2,449.1 52.5,449.5 53.8,449.9 55.0,449.9 56.2,449.4 57.5,450.0 58.8,450.3 60.0,451.5 61.2,451.5 62.4,451.1 63.7,452.5 64.9,452.7 66.1,452.8 67.3,452.3 68.5,452.2 69.7,452.3 71.0,453.4 72.2,453.4 73.4,452.9 74.6,454.1 75.8,453.7 77.0,453.7 78.3,453.9 79.5,454.5 80.7,454.3 81.9,454.8 83.1,454.2 84.3,455.2 85.6,454.8 86.8,455.9 88.0,455.0 89.2,455.3 90.4,455.8 91.6,455.7 92.8,456.0 94.0,456.7 95.2,455.7 96.4,456.7 97.6,456.7 98.8,457.0 100.0,456.6 101.2,456.7 102.4,456.7 103.6,457.0 104.8,456.8 106.0,456.8 107.2,457.3 108.4,457.0 109.6,457.6 110.8,457.9 112.0,457.6 113.2,457.5 114.4,458.3 115.6,458.8 116.8,457.9 118.0,458.6 119.2,458.8 120.4,459.3 121.6,459.1 122.8,458.6 124.0,458.6 125.2,459.7 126.4,459.0 127.6,458.7 128.8,460.1 130.0,459.2 131.2,459.5 132.4,459.6 133.6,459.6 134.8,460.5 136.0,460.0 137.2,460.3 138.4,460.4 139.6,461.1 140.8,460.0 142.0,461.0 143.2,460.4 144.4,460.6 145.6,461.4 146.8,461.2 148.0,460.8 149.2,461.7 150.4,462.4 151.6,462.1 152.8,462.0 154.0,462.6 155.2,462.9 156.4,461.8 157.6,462.1 158.8,463.3 160.0,463.4 161.2,462.3 162.4,463.2 163.6,463.5 164.8,463.2 166.0,463.4 167.2,463.2 168.4,462.8 169.7,462.9 170.9,462.7 172.1,463.7 173.3,463.0 174.5,463.8 175.7,463.5 176.9,463.7 178.1,464.6 179.3,463.8 180.5,464.0 181.7,463.9 182.9,463.7 184.1,463.8 185.3,464.4 186.6,464.9 187.8,463.9 189.0,465.2 190.2,464.9 191.4,464.0 192.6,465.1 193.8,464.7 195.0,465.0 196.2,464.5 197.5,465.3 198.7,465.4 199.9,466.0 201.2,465.8 202.4,466.2 203.6,466.3 204.9,465.7 206.1,465.6 207.3,466.4 208.6,466.0 209.8,466.2 211.0,466.6 212.3,467.1 213.5,467.4 214.7,467.5 216.0,468.2 217.2,467.0 218.4,467.9 219.7,467.3 220.9,468.3 222.1,468.1 223.4,467.8 224.6,468.2 225.8,468.9 227.1,468.8 228.3,469.6 229.5,468.9 230.8,469.0 232.0,470.1 233.2,469.7 234.4,469.0 235.6,470.2 236.9,469.6 238.1,470.7 239.3,470.3 240.5,470.7 241.7,470.9 242.9,470.4 244.1,471.2 245.4,469.9 246.6,470.5 247.8,471.4 249.0,470.2 250.2,471.4 251.4,472.0 252.6,471.6 253.9,472.0 255.1,470.9 256.3,471.7 257.5,471.9 258.7,471.8 259.9,471.9 261.1,472.5 262.4,471.7 263.6,471.6 264.8,472.6 266.0,473.3 267.2,473.2 268.4,473.0 269.6,472.5 270.9,473.6 272.1,472.4 273.3,472.8 274.5,473.7 275.7,474.0 276.9,473.3 278.1,474.2 279.4,473.1 280.6,473.9 281.8,473.2 283.0,473.6 284.2,473.6 285.4,473.4 286.6,474.1 287.9,474.4 289.1,474.1 290.3,474.8 291.5,474.0 292.7,474.8 293.9,474.9 295.1,474.8 296.4,475.7 297.6,474.6 298.8,475.2 300.0,475.3 301.2,475.2 302.4,476.2 303.6,475.6 304.8,475.6 306.0,475.5 307.2,475.5 308.4,476.4 309.6,476.2 310.8,476.0 312.0,475.3 313.2,476.0 314.4,475.3 315.6,475.7 316.8,475.2 318.0,476.3 319.2,476.8 320.4,476.3 321.6,476.2 322.8,475.8 324.0,476.1 325.2,476.2 326.4,476.2 327.6,476.0 328.8,475.9 330.0,476.8 331.2,477.4 332.5,477.5 333.8,477.4 335.0,476.8 336.2,477.5 337.5,478.6 338.8,479.1 340.0,478.7 341.2,479.0 342.5,479.5 343.8,479.1 345.0,480.1 346.4,480.1 347.8,481.3 349.2,481.3 350.6,482.1 352.0,482.5 353.3,483.1 354.6,483.5 355.9,484.9 357.2,485.2 358.5,485.3 359.8,486.0 361.1,487.2 362.4,487.6 363.7,488.0 365.0,489.1 366.3,488.2 367.6,489.4 368.9,489.8 370.2,490.0 371.5,491.2 372.8,491.6 374.1,491.1 375.4,491.9 376.7,492.5 378.0,492.9 379.2,493.3 380.4,494.9 381.6,495.2 382.8,495.9 384.0,497.6 385.2,498.6 386.4,499.2 387.6,500.3 388.8,502.0 390.0,502.7 391.2,502.1 392.4,503.0 393.6,502.5 394.8,502.3 396.0,502.7 397.3,503.3 398.7,503.9 400.0,504.0 401.2,504.6 402.4,504.8 403.7,504.8 404.9,506.1 406.1,506.2 407.3,508.0 408.6,507.8 409.8,508.8 411.0,509.6" fill="none" stroke="#4646c0" stroke-width="0.9"/>
</g>
<line x1="95.00" y1="453.50" x2="409.00" y2="453.50" stroke="#4c545c" stroke-width="1.2" stroke-dasharray="3.5 1.6"/>
<text x="56.00" y="457.20" font-size="10.5" fill="#303090" stroke="#303090" stroke-width="0.2" textLength="37.30" lengthAdjust="spacingAndGlyphs" >-40.4 dB</text>
<polygon points="401,453.3 410,448 410,458.6" fill="#2020e0"/>
<g clip-path="url(#cBR)">
<polygon points="414.0,523.8 415.3,520.7 416.7,516.5 418.0,513.2 419.4,512.5 420.8,510.5 422.2,509.6 423.6,510.7 425.0,508.7 426.2,508.3 427.5,509.6 428.8,508.0 430.0,508.5 431.2,507.3 432.5,507.3 433.8,505.9 435.0,506.6 436.2,506.0 437.5,504.2 438.8,503.6 440.0,502.4 441.2,500.0 442.5,500.4 443.8,499.0 445.0,497.3 446.2,495.7 447.5,496.6 448.8,494.8 450.0,494.3 451.2,493.7 452.5,492.4 453.8,491.9 455.0,489.8 456.2,489.7 457.5,488.0 458.8,488.1 460.0,487.0 461.2,484.4 462.5,483.5 463.8,482.7 465.0,483.4 466.2,482.0 467.5,482.2 468.8,481.3 470.0,481.5 471.2,481.0 472.5,480.7 473.8,481.0 475.0,480.7 476.2,481.2 477.5,480.5 478.8,480.8 480.0,480.4 481.4,479.9 482.8,478.5 484.2,476.6 485.6,477.4 487.0,476.8 488.2,476.1 489.5,474.8 490.8,474.5 492.0,472.8 493.2,473.5 494.5,472.4 495.8,471.1 497.0,470.0 498.3,471.6 499.7,471.7 501.0,469.6 502.3,471.0 503.7,470.0 505.0,469.2 506.4,470.3 507.8,472.2 509.2,473.2 510.6,472.1 512.0,474.2 513.3,473.5 514.7,475.6 516.0,475.3 517.3,477.1 518.7,478.0 520.0,477.5 521.2,479.1 522.5,478.1 523.8,478.1 525.0,479.8 526.2,479.1 527.5,480.0 528.8,480.9 530.0,481.9 531.2,481.4 532.5,481.7 533.8,484.0 535.0,483.3 536.2,485.1 537.4,485.3 538.6,484.5 539.8,485.1 541.0,485.5 542.2,486.2 543.4,486.4 544.6,486.7 545.8,487.2 547.0,488.2 548.2,487.6 549.4,487.8 550.6,488.8 551.8,488.1 553.0,488.6 554.4,491.6 555.8,492.1 557.2,493.7 558.6,494.1 560.0,496.5 561.2,497.7 562.5,497.2 563.8,499.3 565.0,500.1 566.2,499.7 567.5,501.7 568.8,502.1 570.0,503.4 571.3,503.8 572.7,505.8 574.0,507.0 575.3,506.5 576.7,507.8 578.0,510.3 579.4,513.3 580.8,514.1 582.2,516.9 583.6,519.5 585.0,521.3 586.2,520.4 587.5,519.2 588.8,518.3 590.0,517.7 591.2,514.6 592.5,512.4 593.8,510.8 595.0,506.8 596.2,504.8 597.5,502.1 598.8,498.0 600.0,494.7 601.3,494.7 602.7,492.2 604.0,490.8 605.3,490.0 606.7,489.3 608.0,486.7 609.2,487.6 610.4,488.1 611.6,489.6 612.8,489.1 614.0,490.5 615.2,490.6 616.4,492.7 617.6,495.0 618.8,497.2 620.0,497.9 621.2,499.8 622.5,502.1 623.8,505.4 625.0,507.1 626.3,512.6 627.7,516.9 629.0,519.6 630.5,526.4 632.0,534.2 633.2,534.4 634.4,535.3 635.6,534.8 636.8,534.9 638.0,535.8 639.4,536.8 640.8,535.5 642.2,535.5 643.6,535.5 645.0,535.4 646.2,533.0 647.5,531.6 648.8,527.5 650.0,524.7 651.2,523.3 652.5,519.7 653.8,516.5 655.0,511.9 656.2,509.2 657.5,505.3 658.8,499.9 660.0,497.2 661.2,494.7 662.5,491.6 663.8,488.5 665.0,485.2 666.2,482.6 667.5,479.6 668.8,476.5 670.0,474.9 671.2,473.2 672.5,473.3 673.8,470.5 675.0,471.3 676.2,469.8 677.5,469.3 678.8,468.1 680.0,467.1 681.2,466.8 682.5,466.1 683.8,468.1 685.0,467.3 686.2,468.1 687.5,469.3 688.8,469.5 690.0,469.7 691.2,472.2 692.5,472.9 693.8,473.6 695.0,474.8 696.2,477.5 697.5,478.0 698.8,480.1 700.0,480.5 701.2,480.6 702.5,481.8 703.8,482.9 705.0,481.9 706.2,483.8 707.5,484.5 708.8,484.7 710.0,485.2 711.2,484.2 712.5,486.3 713.8,487.6 715.0,486.6 716.2,487.8 717.5,488.6 718.8,489.9 720.0,490.4 721.2,492.0 722.4,494.1 723.6,493.9 724.8,495.5 726.0,497.1 727.3,494.3 728.6,491.4 729.9,490.6 731.1,487.5 732.4,483.1 733.7,481.2 735.0,478.0 736.2,474.9 737.5,472.0 738.8,469.6 740.0,466.4 741.2,462.8 742.5,459.4 743.8,456.7 745.0,453.2 746.2,453.1 747.5,452.4 748.8,450.5 750.0,448.8 751.2,448.0 752.5,447.3 753.8,446.8 755.0,446.1 756.2,445.5 757.5,446.8 758.8,446.7 760.0,446.6 761.2,446.8 762.5,447.4 763.8,448.1 765.0,447.8 766.3,447.4 767.6,445.8 768.9,444.3 770.1,443.9 771.4,443.2 772.7,440.8 774.0,440.5 774.0,447.9 772.7,449.8 771.4,451.0 770.1,451.8 768.9,451.8 767.6,453.7 766.3,454.7 765.0,456.2 763.8,455.4 762.5,455.8 761.2,454.0 760.0,455.1 758.8,455.3 757.5,453.9 756.2,455.1 755.0,454.1 753.8,454.3 752.5,455.9 751.2,457.4 750.0,457.9 748.8,460.4 747.5,462.0 746.2,461.8 745.0,464.7 743.8,468.5 742.5,471.2 741.2,474.6 740.0,478.7 738.8,482.1 737.5,484.7 736.2,489.4 735.0,492.3 733.7,497.8 732.4,502.8 731.1,507.6 729.9,512.8 728.6,517.9 727.3,521.0 726.0,527.5 724.8,522.6 723.6,517.8 722.4,514.0 721.2,508.2 720.0,504.4 718.8,504.7 717.5,503.7 716.2,503.2 715.0,502.9 713.8,502.2 712.5,503.1 711.2,502.7 710.0,502.2 708.8,499.7 707.5,500.6 706.2,498.7 705.0,497.8 703.8,497.8 702.5,497.0 701.2,495.5 700.0,495.2 698.8,492.6 697.5,491.7 696.2,490.0 695.0,488.2 693.8,486.1 692.5,483.4 691.2,480.9 690.0,478.9 688.8,479.5 687.5,479.0 686.2,476.9 685.0,476.3 683.8,476.0 682.5,475.1 681.2,476.1 680.0,474.4 678.8,476.8 677.5,477.9 676.2,479.1 675.0,480.5 673.8,482.1 672.5,484.5 671.2,484.9 670.0,487.0 668.8,489.6 667.5,495.1 666.2,497.6 665.0,501.0 663.8,504.8 662.5,509.3 661.2,512.5 660.0,516.6 658.8,520.7 657.5,523.5 656.2,527.9 655.0,532.4 653.8,540.0 652.5,547.7 651.2,554.8 650.0,562.2 648.8,562.5 647.5,561.6 646.2,561.2 645.0,563.0 643.6,561.2 642.2,562.3 640.8,562.9 639.4,561.3 638.0,562.3 636.8,562.3 635.6,561.3 634.4,562.1 633.2,562.4 632.0,562.5 630.5,549.8 629.0,538.3 627.7,532.8 626.3,529.1 625.0,524.8 623.8,522.6 622.5,519.4 621.2,515.6 620.0,514.0 618.8,512.1 617.6,510.6 616.4,508.3 615.2,507.8 614.0,506.3 612.8,504.7 611.6,505.3 610.4,502.7 609.2,503.8 608.0,503.1 606.7,503.4 605.3,506.7 604.0,508.0 602.7,509.7 601.3,512.7 600.0,514.5 598.8,521.6 597.5,526.7 596.2,531.8 595.0,538.3 593.8,544.1 592.5,549.8 591.2,555.0 590.0,562.4 588.8,562.2 587.5,561.7 586.2,561.5 585.0,562.7 583.6,556.6 582.2,552.2 580.8,549.1 579.4,544.0 578.0,539.3 576.7,538.2 575.3,534.5 574.0,533.6 572.7,531.2 571.3,528.6 570.0,525.1 568.8,524.2 567.5,523.0 566.2,522.1 565.0,522.4 563.8,521.6 562.5,520.0 561.2,519.0 560.0,516.9 558.6,513.9 557.2,511.4 555.8,509.5 554.4,506.0 553.0,502.3 551.8,502.9 550.6,502.3 549.4,501.4 548.2,501.2 547.0,501.5 545.8,501.2 544.6,500.0 543.4,499.9 542.2,499.3 541.0,500.1 539.8,497.9 538.6,498.9 537.4,497.6 536.2,497.3 535.0,496.6 533.8,496.4 532.5,495.9 531.2,494.2 530.0,493.9 528.8,493.3 527.5,493.3 526.2,493.2 525.0,491.6 523.8,491.5 522.5,489.9 521.2,490.7 520.0,489.4 518.7,487.2 517.3,486.1 516.0,485.4 514.7,483.3 513.3,482.2 512.0,480.8 510.6,481.4 509.2,480.2 507.8,479.8 506.4,480.1 505.0,479.1 503.7,478.0 502.3,478.5 501.0,480.4 499.7,480.2 498.3,480.1 497.0,480.5 495.8,481.7 494.5,482.7 493.2,483.4 492.0,483.1 490.8,485.2 489.5,485.3 488.2,487.4 487.0,487.2 485.6,487.0 484.2,488.5 482.8,489.2 481.4,490.0 480.0,490.7 478.8,491.1 477.5,492.2 476.2,492.2 475.0,491.7 473.8,491.9 472.5,492.3 471.2,493.9 470.0,493.7 468.8,493.5 467.5,493.2 466.2,495.4 465.0,495.3 463.8,495.5 462.5,498.4 461.2,499.5 460.0,501.6 458.8,501.6 457.5,504.8 456.2,505.9 455.0,508.2 453.8,509.9 452.5,511.4 451.2,513.7 450.0,514.0 448.8,517.5 447.5,517.6 446.2,519.9 445.0,523.3 443.8,523.1 442.5,524.5 441.2,525.8 440.0,528.9 438.8,528.9 437.5,530.0 436.2,532.8 435.0,533.1 433.8,534.9 432.5,535.9 431.2,536.5 430.0,537.5 428.8,538.4 427.5,538.6 426.2,539.7 425.0,538.9 423.6,542.3 422.2,544.5 420.8,548.3 419.4,551.2 418.0,552.7 416.7,557.0 415.3,559.8 414.0,561.8" fill="#dc8cee" stroke="#a444bc" stroke-width="1.15" stroke-linejoin="round"/>
<polyline points="414.0,543.6 415.3,539.8 416.7,535.8 418.0,532.3 419.4,530.6 420.8,529.1 422.2,527.3 423.6,526.2 425.0,524.8 426.2,524.0 427.5,523.3 428.8,523.1 430.0,522.0 431.2,521.7 432.5,521.6 433.8,520.5 435.0,519.7 436.2,519.5 437.5,518.0 438.8,516.2 440.0,514.9 441.2,513.9 442.5,512.8 443.8,510.9 445.0,509.3 446.2,508.2 447.5,507.7 448.8,505.2 450.0,504.3 451.2,502.5 452.5,501.0 453.8,499.6 455.0,498.5 456.2,496.9 457.5,495.4 458.8,494.3 460.0,493.1 461.2,492.3 462.5,490.4 463.8,489.1 465.0,488.5 466.2,488.2 467.5,488.4 468.8,487.1 470.0,487.4 471.2,487.1 472.5,486.2 473.8,487.4 475.0,486.0 476.2,485.5 477.5,485.8 478.8,485.1 480.0,485.5 481.4,484.3 482.8,483.2 484.2,482.3 485.6,482.6 487.0,481.2 488.2,481.2 489.5,480.0 490.8,480.0 492.0,478.3 493.2,477.5 494.5,476.8 495.8,477.0 497.0,475.9 498.3,475.3 499.7,474.6 501.0,475.3 502.3,475.5 503.7,474.7 505.0,473.5 506.4,474.3 507.8,475.0 509.2,475.8 510.6,476.3 512.0,477.0 513.3,478.9 514.7,480.2 516.0,480.0 517.3,482.1 518.7,482.3 520.0,483.7 521.2,484.5 522.5,485.1 523.8,484.4 525.0,485.4 526.2,486.4 527.5,487.6 528.8,486.9 530.0,487.8 531.2,489.2 532.5,488.7 533.8,489.7 535.0,490.3 536.2,491.2 537.4,491.9 538.6,491.1 539.8,492.3 541.0,492.6 542.2,493.1 543.4,493.0 544.6,494.0 545.8,493.4 547.0,493.9 548.2,493.9 549.4,495.1 550.6,495.0 551.8,495.0 553.0,495.2 554.4,498.4 555.8,500.5 557.2,502.9 558.6,504.7 560.0,507.1 561.2,507.5 562.5,509.2 563.8,509.1 565.0,510.7 566.2,512.1 567.5,512.8 568.8,512.9 570.0,514.0 571.3,516.7 572.7,518.1 574.0,520.2 575.3,521.9 576.7,523.0 578.0,525.4 579.4,528.6 580.8,531.4 582.2,534.8 583.6,537.8 585.0,541.7 586.2,542.0 587.5,540.2 588.8,540.4 590.0,539.1 591.2,534.9 592.5,531.6 593.8,526.8 595.0,522.4 596.2,518.0 597.5,514.2 598.8,509.6 600.0,504.2 601.3,502.9 602.7,502.4 604.0,499.5 605.3,498.4 606.7,496.5 608.0,495.3 609.2,495.6 610.4,496.5 611.6,496.6 612.8,496.7 614.0,497.2 615.2,498.6 616.4,501.4 617.6,501.9 618.8,503.3 620.0,506.4 621.2,507.8 622.5,511.5 623.8,512.8 625.0,516.0 626.3,520.1 627.7,525.4 629.0,529.5 630.5,538.7 632.0,548.2 633.2,548.6 634.4,548.1 635.6,548.7 636.8,548.8 638.0,548.5 639.4,549.6 640.8,549.1 642.2,549.4 643.6,548.4 645.0,548.9 646.2,547.5 647.5,546.7 648.8,544.5 650.0,543.7 651.2,538.5 652.5,532.5 653.8,527.9 655.0,522.8 656.2,518.3 657.5,514.6 658.8,510.5 660.0,505.9 661.2,502.9 662.5,500.7 663.8,496.5 665.0,493.5 666.2,489.8 667.5,486.8 668.8,483.5 670.0,481.5 671.2,479.9 672.5,478.8 673.8,477.7 675.0,475.8 676.2,475.0 677.5,473.1 678.8,471.6 680.0,471.1 681.2,471.6 682.5,472.2 683.8,472.0 685.0,473.0 686.2,473.0 687.5,474.4 688.8,474.9 690.0,474.4 691.2,477.1 692.5,477.6 693.8,479.1 695.0,481.8 696.2,482.8 697.5,484.8 698.8,486.6 700.0,487.4 701.2,489.1 702.5,489.0 703.8,489.8 705.0,490.3 706.2,491.5 707.5,492.2 708.8,492.1 710.0,492.4 711.2,493.2 712.5,493.9 713.8,494.0 715.0,494.6 716.2,496.1 717.5,496.5 718.8,497.5 720.0,498.0 721.2,500.9 722.4,503.2 723.6,505.9 724.8,509.1 726.0,512.4 727.3,508.7 728.6,504.9 729.9,500.8 731.1,497.7 732.4,493.0 733.7,489.5 735.0,486.3 736.2,482.8 737.5,478.7 738.8,475.3 740.0,472.8 741.2,468.2 742.5,465.0 743.8,462.3 745.0,459.0 746.2,457.2 747.5,455.9 748.8,455.0 750.0,454.7 751.2,453.1 752.5,452.8 753.8,451.3 755.0,450.5 756.2,449.3 757.5,449.7 758.8,449.7 760.0,450.6 761.2,450.7 762.5,450.5 763.8,451.5 765.0,451.0 766.3,450.3 767.6,449.2 768.9,449.0 770.1,447.4 771.4,446.1 772.7,444.7 774.0,444.2" fill="none" stroke="#a444bc" stroke-width="0.9"/>
</g>
<g clip-path="url(#cTL)">
<polygon points="51.8,256.0 53.8,235.9 55.8,228.2 57.7,223.1 58.0,224.9 59.2,225.0 60.2,226.1 61.6,228.0 63.6,230.7 65.5,234.0 66.9,237.8 68.5,242.1 70.1,244.6 72.0,247.4 74.3,247.6 76.6,247.9 79.1,245.8 81.4,243.7 83.1,240.0 83.9,237.5 84.5,238.8 87.4,238.8 89.6,237.6 90.2,236.2 91.1,237.3 93.9,238.9 96.5,237.3 98.3,236.0 99.9,233.4 100.6,232.2 101.8,232.7 104.5,231.9 106.7,229.0 108.6,226.0 110.5,224.7 112.5,223.4 114.5,221.9 116.1,220.2 117.5,221.4 119.4,222.9 121.4,224.9 123.2,226.6 125.2,232.5 126.5,238.4 128.0,242.5 129.4,247.1 131.6,261.0 136.2,254.8 135.2,256.9 138.2,259.4 140.9,256.2 140.6,253.6 141.0,256.7 142.5,260.8 143.9,268.2 145.4,276.2 147.4,291.7 148.5,302.5 153.6,302.5 154.8,278.4 156.3,268.5 157.8,258.0 159.3,246.9 160.8,235.6 162.3,226.6 163.8,217.6 165.8,213.4 167.8,208.9 169.4,204.9 171.1,201.2 172.7,197.2 174.1,196.6 175.8,195.3 177.1,194.4 178.3,194.9 179.7,195.2 181.1,196.0 183.2,197.0 185.2,195.3 186.9,194.6 188.7,193.2 190.5,192.1 192.2,190.6 193.9,189.6 195.4,187.8 197.0,188.0 198.5,187.9 200.4,190.3 202.3,191.9 203.9,195.2 205.6,198.4 207.2,201.9 208.8,204.4 210.3,207.1 211.8,209.3 213.3,212.1 215.1,213.6 216.7,215.4 218.3,216.7 219.7,220.8 221.2,225.6 223.2,230.8 225.2,235.9 227.2,245.6 229.2,255.3 231.7,257.9 233.3,250.9 234.8,244.8 236.8,240.5 238.8,236.1 241.5,214.5 243.2,210.1 244.8,205.7 246.5,201.5 248.1,197.3 249.7,195.6 251.4,194.7 252.9,193.2 254.0,193.9 255.8,194.6 257.5,195.0 259.8,195.7 262.1,192.8 264.1,190.5 265.8,186.7 267.5,183.4 269.1,180.2 270.7,177.0 272.2,175.9 273.8,174.3 275.3,173.0 276.9,171.8 278.3,170.5 279.9,170.5 281.6,170.0 283.2,170.3 285.0,170.8 286.7,171.2 288.2,171.8 289.8,174.4 291.4,177.1 293.1,179.5 294.7,182.5 296.4,189.7 298.2,196.5 299.6,203.6 301.6,222.6 303.6,242.3 307.8,235.7 309.6,228.9 311.3,222.6 313.3,216.9 314.9,212.2 315.3,214.6 318.2,216.7 320.9,214.9 323.2,213.4 325.3,207.5 327.3,202.6 329.0,200.4 330.7,197.6 332.2,194.7 333.9,193.2 335.7,191.9 337.5,190.5 339.1,189.6 340.7,188.0 342.4,186.9 344.0,185.2 345.6,183.8 347.2,182.3 348.8,180.5 350.5,178.5 352.0,176.6 353.7,174.7 355.3,171.9 356.9,168.9 358.5,166.5 360.1,163.7 361.6,161.0 363.3,160.2 364.8,159.5 366.2,160.8 367.9,162.6 369.5,164.0 371.1,172.6 372.7,182.0 374.3,191.1 375.9,200.2 377.8,209.4 380.8,202.5 382.5,196.1 384.1,189.8 385.8,183.5 387.5,180.6 389.3,177.5 390.6,174.5 391.3,176.1 393.0,178.4 394.7,180.6 396.2,182.0 397.8,190.3 399.4,198.5 401.0,206.4 402.6,214.3 405.6,222.6 407.8,210.7 409.8,199.9 411.3,195.9 412.8,192.6 411.2,191.9 409.7,195.3 408.2,199.5 406.2,210.4 404.4,221.4 404.2,214.0 402.6,206.0 401.0,198.1 399.4,190.0 397.8,181.4 396.0,179.5 394.3,177.3 392.6,175.1 390.0,173.0 387.8,176.7 386.0,179.8 384.2,182.9 382.5,189.3 380.8,195.7 379.2,202.0 378.8,208.0 377.5,199.9 375.9,190.8 374.3,181.7 372.7,172.3 371.1,163.5 369.1,161.4 367.4,159.5 365.2,157.8 362.7,158.6 360.4,159.8 358.7,162.8 357.1,165.6 355.5,168.1 353.9,171.1 352.3,173.7 350.8,175.5 349.1,177.5 347.6,179.4 346.0,181.1 344.4,182.6 342.8,184.0 341.2,185.6 339.7,186.7 338.1,188.2 336.5,189.1 334.7,190.6 332.8,191.8 330.8,193.6 328.7,196.3 327.0,199.0 325.1,201.5 323.1,206.7 321.2,212.2 319.5,212.9 318.2,214.3 317.1,213.0 313.5,210.2 311.1,216.1 309.1,221.9 307.2,228.3 305.4,235.0 306.0,241.6 304.0,222.4 302.0,203.2 299.9,196.0 298.1,189.3 296.3,182.0 294.6,178.7 292.9,176.1 291.2,173.5 289.4,170.6 287.3,169.6 285.4,169.2 283.6,168.6 281.6,168.3 279.7,168.8 277.7,168.9 275.9,170.4 274.3,171.7 272.6,173.1 271.0,174.6 269.3,176.0 267.6,179.4 265.9,182.7 264.3,186.0 262.7,189.6 260.7,191.7 259.0,194.2 258.0,193.4 256.3,193.0 254.7,192.4 252.5,191.6 250.4,193.3 248.6,194.3 246.7,196.5 244.9,200.9 243.3,205.1 241.6,209.5 239.9,214.2 237.2,235.8 235.2,239.8 233.2,244.3 231.7,250.6 230.3,257.0 230.8,254.9 228.8,245.3 226.8,235.5 224.8,230.2 222.8,225.0 221.3,220.2 219.7,215.9 217.9,214.2 216.3,212.4 214.7,211.0 213.2,208.4 211.7,206.2 210.2,203.6 208.8,201.1 207.1,197.7 205.4,194.5 203.7,190.9 201.6,189.2 199.5,186.5 197.0,186.3 194.6,186.3 192.8,188.3 191.2,189.2 189.5,190.8 187.8,191.8 186.1,193.1 184.3,193.9 182.8,195.3 181.9,194.5 180.3,193.7 178.7,193.3 176.9,192.7 174.8,193.9 173.2,195.2 171.3,196.2 169.6,200.5 167.9,204.2 166.2,208.3 164.2,212.7 162.2,217.2 160.7,226.3 159.2,235.3 157.7,246.7 156.2,257.8 154.7,268.3 153.2,278.3 150.4,301.9 151.5,301.7 150.6,291.3 148.6,275.8 147.1,267.6 145.5,260.0 144.0,255.7 141.4,250.5 138.1,254.8 137.8,256.3 137.8,255.0 133.8,252.8 134.4,259.4 132.6,246.4 131.0,241.5 129.5,237.3 126.8,232.0 124.8,225.9 122.6,223.7 120.6,221.6 118.5,220.0 115.9,218.5 113.5,220.6 111.5,222.0 109.5,223.3 107.4,224.8 105.3,228.0 103.5,230.4 102.2,229.3 99.4,229.1 97.1,231.4 95.7,233.8 94.5,234.6 94.1,235.5 92.9,234.4 89.8,232.9 87.4,235.1 86.6,235.5 85.5,235.5 82.1,234.6 79.9,238.6 78.6,241.8 76.9,243.3 75.4,244.7 74.7,244.2 74.0,244.7 72.9,242.8 71.5,240.7 70.1,236.6 68.5,232.5 66.4,228.9 64.4,226.0 62.8,223.9 60.8,222.0 59.0,221.6 56.3,222.1 54.2,227.7 52.2,235.6 50.2,255.8" fill="#dc6872" stroke="#c02636" stroke-width="1.1" stroke-linejoin="round"/>
</g>
<line x1="122.60" y1="210.30" x2="122.60" y2="218.60" stroke="#7a4650" stroke-width="1.1" />
<polygon points="117.8,218.6 127.4,218.6 122.6,223.8" fill="none" stroke="#d04858" stroke-width="1.2"/>
<line x1="196.20" y1="173.70" x2="196.20" y2="182.00" stroke="#7a4650" stroke-width="1.1" />
<polygon points="191.4,182.0 201.0,182.0 196.2,187.2" fill="none" stroke="#d04858" stroke-width="1.2"/>
<path d="M67.5,39.2 H72.5 A5.6,5.6 0 0 1 72.5,50.4 H68.8" fill="none" stroke="#f4f6f8" stroke-width="2.7"/>
<polygon points="60.8,39.2 68.3,33.8 68.3,44.6" fill="#f4f6f8"/>
<path d="M109,39.2 H104 A5.6,5.6 0 0 0 104,50.4 H106.5" fill="none" stroke="#6d7b86" stroke-width="2.7"/>
<polygon points="115.6,39.2 108.1,33.8 108.1,44.6" fill="#6d7b86"/>
<rect x="132.6" y="32.3" width="13.6" height="13.2" fill="none" stroke="#f4f6f8" stroke-width="1.6" stroke-dasharray="2.6 1.6"/>
<circle cx="146.6" cy="45.2" r="6.2" fill="#1e252c" stroke="#f4f6f8" stroke-width="2"/>
<line x1="150.8" y1="49.6" x2="154.2" y2="53" stroke="#f4f6f8" stroke-width="3" stroke-linecap="round"/>
<circle cx="182.4" cy="37.4" r="5.6" fill="none" stroke="#6d7b86" stroke-width="2"/>
<line x1="186.2" y1="41.4" x2="189.6" y2="45.2" stroke="#6d7b86" stroke-width="2.8" stroke-linecap="round"/>
<text x="168.70" y="52.20" font-size="9" fill="#6d7b86" stroke="#6d7b86" stroke-width="0.3" font-weight="bold" textLength="9.60" lengthAdjust="spacingAndGlyphs" >1:1</text>
<circle cx="218.4" cy="37.6" r="5.6" fill="none" stroke="#f4f6f8" stroke-width="1.8"/>
<line x1="222.6" y1="41.8" x2="225.8" y2="44.8" stroke="#f4f6f8" stroke-width="2.6" stroke-linecap="round"/>
<polygon points="215.9,48.3 214.4,49.6 215.1,51.4 213.2,51.8 212.8,53.7 211.0,53.0 209.7,54.5 208.4,53.0 206.6,53.7 206.2,51.8 204.3,51.4 205.0,49.6 203.5,48.3 205.0,47.0 204.3,45.2 206.2,44.8 206.6,42.9 208.4,43.6 209.7,42.1 211.0,43.6 212.8,42.9 213.2,44.8 215.1,45.2 214.4,47.0" fill="#6cc6f0"/>
<circle cx="209.7" cy="48.3" r="2.3" fill="#0c3458"/>
<polygon points="211.6,56.2 217.4,56.2 214.5,59.4" fill="#f4f6f8"/>
<line x1="251.0" y1="40.4" x2="244.5" y2="33.9" stroke="#f4f6f8" stroke-width="2.4"/>
<polygon points="243.0,32.4 249.4,32.4 247.6,34.2 244.8,34.2 244.8,37.0 243.0,38.8" fill="#f4f6f8"/>
<line x1="255.4" y1="40.4" x2="261.9" y2="33.9" stroke="#f4f6f8" stroke-width="2.4"/>
<polygon points="263.4,32.4 257.0,32.4 258.8,34.2 261.6,34.2 261.6,37.0 263.4,38.8" fill="#f4f6f8"/>
<line x1="251.0" y1="44.8" x2="244.5" y2="51.3" stroke="#f4f6f8" stroke-width="2.4"/>
<polygon points="243.0,52.8 249.4,52.8 247.6,51.0 244.8,51.0 244.8,48.2 243.0,46.4" fill="#f4f6f8"/>
<line x1="255.4" y1="44.8" x2="261.9" y2="51.3" stroke="#f4f6f8" stroke-width="2.4"/>
<polygon points="263.4,52.8 257.0,52.8 258.8,51.0 261.6,51.0 261.6,48.2 263.4,46.4" fill="#f4f6f8"/>
<path d="M280,43.2 C284.5,43 285.5,32.8 289,32.8 C292.5,32.8 293.5,43 298.2,43.2" fill="none" stroke="#f4f6f8" stroke-width="1.7"/>
<text x="281.60" y="52.30" font-size="8.5" fill="#f4f6f8" textLength="11.30" lengthAdjust="spacingAndGlyphs" >Trc</text>
<path d="M297.6,45.8 V53.2 M293.9,49.5 H301.3" stroke="#46b2e6" stroke-width="2"/>
<polygon points="316.8,32.6 331.2,32.6 324,42.8" fill="#f4f6f8"/>
<text x="315.00" y="52.30" font-size="8.5" fill="#f4f6f8" textLength="13.60" lengthAdjust="spacingAndGlyphs" >Mkr</text>
<path d="M334,45.8 V53.2 M330.3,49.5 H337.7" stroke="#46b2e6" stroke-width="2"/>
<rect x="353.80" y="33.40" width="16.40" height="2.40" fill="#f4f6f8" />
<rect x="359.20" y="31.60" width="5.60" height="2.20" fill="#f4f6f8" />
<rect x="355.60" y="37.40" width="12.90" height="15.80" fill="#f4f6f8" />
<rect x="357.90" y="39.60" width="1.25" height="11.60" fill="#1e252c" />
<rect x="360.65" y="39.60" width="1.25" height="11.60" fill="#1e252c" />
<rect x="363.40" y="39.60" width="1.25" height="11.60" fill="#1e252c" />
<rect x="366.15" y="39.60" width="1.25" height="11.60" fill="#1e252c" />
<rect x="392.6" y="31.6" width="13.4" height="7.2" fill="none" stroke="#f4f6f8" stroke-width="1.6"/>
<rect x="388" y="38" width="22.8" height="10.6" rx="1.5" fill="#f4f6f8"/>
<rect x="389.80" y="39.60" width="1.50" height="1.50" fill="#1e252c" />
<rect x="392.6" y="47" width="8.6" height="6.6" fill="#1e252c" stroke="#f4f6f8" stroke-width="1.6"/>
<rect x="394.40" y="49.60" width="5.00" height="1.00" fill="#f4f6f8" />
<rect x="394.40" y="51.40" width="5.00" height="1.00" fill="#f4f6f8" />
<rect x="400.40" y="43.80" width="10.40" height="10.60" fill="#1e5e7c" />
<rect x="401.60" y="45.00" width="8.00" height="9.40" fill="#46b2e6" />
<rect x="403.40" y="45.00" width="4.20" height="3.40" fill="#1e5e7c" />
<rect x="402.80" y="50.20" width="5.80" height="4.20" fill="#9ad8f0" />
<polygon points="426.6,37.6 434.2,36.6 434.2,42.6 426.6,42.6" fill="#f4f6f8"/>
<polygon points="435.4,36.4 444.2,35.2 444.2,42.6 435.4,42.6" fill="#f4f6f8"/>
<polygon points="426.6,43.8 434.2,43.8 434.2,49.8 426.6,48.8" fill="#f4f6f8"/>
<polygon points="435.4,43.8 444.2,43.8 444.2,51.2 435.4,50" fill="#f4f6f8"/>
<circle cx="471.8" cy="42.6" r="10" fill="#f2c81c"/>
<text x="471.80" y="48.60" font-size="16.5" fill="#1c1c1c" font-weight="bold" text-anchor="middle" >?</text>
<path d="M501.2,38.1 A7.8,7.8 0 1 1 500.3,45.3" fill="none" stroke="#f4f6f8" stroke-width="2.6"/>
<polygon points="496.8,33.4 496.8,41.2 504.6,41.2" fill="#f4f6f8"/>
<polygon points="512,43.1 519.3,48.7 512,54.2" fill="#46b2e6" stroke="#0e1a22" stroke-width="1"/>
<defs><clipPath id="cdisp"><rect x="534.1" y="31.9" width="21.5" height="20.8"/></clipPath></defs>
<rect x="533.6" y="31.4" width="22.5" height="21.8" fill="#3a3f45" stroke="#dde1e4" stroke-width="1.7"/>
<g clip-path="url(#cdisp)">
<line x1="524" y1="28" x2="552" y2="56" stroke="#5d646b" stroke-width="3.2"/>
<line x1="532" y1="28" x2="560" y2="56" stroke="#5d646b" stroke-width="3.2"/>
<line x1="540" y1="28" x2="568" y2="56" stroke="#5d646b" stroke-width="3.2"/>
</g>
<line x1="573.5" y1="39.8" x2="589.5" y2="39.8" stroke="#46b2e6" stroke-width="1.6"/>
<polygon points="570.6,39.8 575.6,36.2 575.6,43.4" fill="#46b2e6"/>
<polygon points="592.4,39.8 587.4,36.2 587.4,43.4" fill="#46b2e6"/>
<rect x="570.60" y="46.40" width="7.20" height="3.60" fill="#f4f6f8" />
<rect x="577.20" y="44.60" width="3.60" height="7.20" fill="#f4f6f8" />
<rect x="582.40" y="44.60" width="3.60" height="7.20" fill="#f4f6f8" />
<rect x="585.20" y="46.40" width="7.20" height="3.60" fill="#f4f6f8" />
<line x1="614.4" y1="40.2" x2="625.6" y2="51.4" stroke="#7a8a98" stroke-width="2.5" stroke-linecap="round"/>
<path d="M610.4,34.0 A3.6,3.6 0 1 1 608.2,36.2" fill="none" stroke="#7a8a98" stroke-width="2.3"/>
<text x="649.30" y="40.90" font-size="12" fill="#f4f6f8" font-weight="bold" textLength="10.90" lengthAdjust="spacingAndGlyphs" >RF</text>
<rect x="637.00" y="47.30" width="16.40" height="13.50" fill="#12161a" />
<text x="639.20" y="58.20" font-size="9" fill="#f4f6f8" font-weight="bold" textLength="11.60" lengthAdjust="spacingAndGlyphs" >off</text>
<rect x="655.80" y="49.00" width="17.00" height="11.80" fill="#1a7ccc" />
<text x="658.80" y="58.20" font-size="9" fill="#f4f6f8" font-weight="bold" textLength="10.80" lengthAdjust="spacingAndGlyphs" >on</text>
<path d="M751,36.6 L763.6,49 M763.6,36.6 L751,49" stroke="#f4f6f8" stroke-width="2.8"/>
<rect x="778.00" y="24.50" width="125.00" height="551.50" fill="#20272e" />
<rect x="903.00" y="24.50" width="1.80" height="551.50" fill="#07090b" />
<rect x="779.80" y="27.20" width="120.20" height="34.60" fill="#4a5c6b" />
<text x="803.90" y="41.80" font-size="11.5" fill="#eef0f2" textLength="54.60" lengthAdjust="spacingAndGlyphs" >METAS Cal</text>
<text x="803.90" y="56.40" font-size="11.5" fill="#eef0f2" textLength="31.10" lengthAdjust="spacingAndGlyphs" >Active</text>
<rect x="785" y="38" width="12.6" height="12.6" fill="#43535f" stroke="#7f8e9a" stroke-width="1.4"/>
<polyline points="787.6,44.2 790.4,47.4 795.4,40.6" fill="none" stroke="#f4f6f8" stroke-width="2"/>
<rect x="799.50" y="67.40" width="80.80" height="2.00" fill="#c5cace" />
<rect x="799.50" y="135.80" width="80.80" height="2.00" fill="#c5cace" />
<rect x="799.50" y="184.40" width="80.80" height="2.00" fill="#c5cace" />
<rect x="799.50" y="273.30" width="80.80" height="2.00" fill="#c5cace" />
<text x="790.00" y="86.80" font-size="11.5" fill="#dde0e3" font-weight="bold" textLength="98.40" lengthAdjust="spacingAndGlyphs" >METAS Calibration</text>
<rect x="779.80" y="94.80" width="120.20" height="35.40" fill="#4a5c6b" />
<text x="785.00" y="110.20" font-size="11.5" fill="#eef0f2" textLength="33.50" lengthAdjust="spacingAndGlyphs" >Start...</text>
<text x="785.00" y="124.60" font-size="11.5" fill="#eef0f2" textLength="47.90" lengthAdjust="spacingAndGlyphs" >(Manual)</text>
<rect x="779.80" y="143.50" width="120.20" height="35.10" fill="#4a5c6b" />
<text x="785.00" y="158.90" font-size="11.5" fill="#eef0f2" textLength="24.40" lengthAdjust="spacingAndGlyphs" >Start</text>
<text x="785.00" y="173.30" font-size="11.5" fill="#eef0f2" textLength="68.70" lengthAdjust="spacingAndGlyphs" >Verification...</text>
<rect x="779.80" y="192.00" width="120.20" height="34.90" fill="#4a5c6b" />
<text x="785.00" y="207.40" font-size="11.5" fill="#eef0f2" textLength="23.80" lengthAdjust="spacingAndGlyphs" >Save</text>
<text x="785.00" y="221.80" font-size="11.5" fill="#eef0f2" textLength="83.20" lengthAdjust="spacingAndGlyphs" >Measurement...</text>
<rect x="779.80" y="233.00" width="120.20" height="34.60" fill="#4a5c6b" />
<text x="785.00" y="248.40" font-size="11.5" fill="#eef0f2" textLength="77.00" lengthAdjust="spacingAndGlyphs" >Export Data to</text>
<text x="785.00" y="262.80" font-size="11.5" fill="#eef0f2" textLength="101.90" lengthAdjust="spacingAndGlyphs" >METAS VNA Tools...</text>
<rect x="779.80" y="281.00" width="120.20" height="34.80" fill="#4a5c6b" />
<text x="785.00" y="296.40" font-size="11.5" fill="#eef0f2" textLength="36.00" lengthAdjust="spacingAndGlyphs" >METAS</text>
<text x="785.00" y="310.80" font-size="11.5" fill="#eef0f2" textLength="82.60" lengthAdjust="spacingAndGlyphs" >Reconnection...</text>
<rect x="873.6" y="110.2" width="12.8" height="13" rx="1.5" fill="none" stroke="#e2505c" stroke-width="1.9"/>
<polygon points="871.4,114.6 875.8,114.6 873.6,118.2" fill="#e2505c"/>
<polygon points="884.2,118.8 888.6,118.8 886.4,115.2" fill="#e2505c"/>
<line x1="889.6" y1="106.8" x2="895.2" y2="112.6" stroke="#f4f6f8" stroke-width="2.4" stroke-linecap="round"/>
<path d="M889.8,102.4 A3.2,3.2 0 1 1 885.2,104.6" fill="none" stroke="#f4f6f8" stroke-width="2.3"/>
<rect x="873.6" y="159.0" width="12.8" height="13" rx="1.5" fill="none" stroke="#e2505c" stroke-width="1.9"/>
<polygon points="871.4,163.4 875.8,163.4 873.6,167.0" fill="#e2505c"/>
<polygon points="884.2,167.6 888.6,167.6 886.4,164.0" fill="#e2505c"/>
<line x1="889.6" y1="155.6" x2="895.2" y2="161.4" stroke="#f4f6f8" stroke-width="2.4" stroke-linecap="round"/>
<path d="M889.8,151.2 A3.2,3.2 0 1 1 885.2,153.4" fill="none" stroke="#f4f6f8" stroke-width="2.3"/>
<path d="M875.2,200.8 H891.2 L894,203.6 V218.8 H875.2 Z" fill="none" stroke="#f4f6f8" stroke-width="1.7"/>
<rect x="879.20" y="201.40" width="9.60" height="5.20" fill="#f4f6f8" />
<rect x="880.80" y="202.20" width="6.40" height="3.60" fill="#4a5c6b" />
<rect x="878.20" y="210.80" width="12.80" height="8.00" fill="#f4f6f8" />
<line x1="876" y1="295.2" x2="894" y2="295.2" stroke="#46b2e6" stroke-width="1.5"/>
<polygon points="873.4,295.2 878,292 878,298.4" fill="#46b2e6"/>
<polygon points="896.6,295.2 892,292 892,298.4" fill="#46b2e6"/>
<rect x="873.40" y="301.20" width="7.60" height="3.40" fill="#f4f6f8" />
<rect x="880.00" y="299.40" width="3.40" height="7.00" fill="#f4f6f8" />
<rect x="886.60" y="299.40" width="3.40" height="7.00" fill="#f4f6f8" />
<rect x="889.00" y="301.20" width="7.60" height="3.40" fill="#f4f6f8" />
<rect x="904.80" y="24.70" width="68.20" height="39.80" fill="#20272e" />
<text x="910.20" y="41.90" font-size="11.5" fill="#eceef0" textLength="24.70" lengthAdjust="spacingAndGlyphs" >Start</text>
<text x="910.20" y="56.30" font-size="11.5" fill="#eceef0" textLength="17.60" lengthAdjust="spacingAndGlyphs" >Cal</text>
<rect x="904.80" y="66.60" width="68.20" height="40.70" fill="#20272e" />
<text x="910.20" y="83.80" font-size="11.5" fill="#eceef0" textLength="17.60" lengthAdjust="spacingAndGlyphs" >Cal</text>
<text x="910.20" y="98.20" font-size="11.5" fill="#eceef0" textLength="39.00" lengthAdjust="spacingAndGlyphs" >Devices</text>
<rect x="904.80" y="109.70" width="68.20" height="40.10" fill="#20272e" />
<text x="910.20" y="126.90" font-size="11.5" fill="#eceef0" textLength="52.70" lengthAdjust="spacingAndGlyphs" >Power Cal</text>
<text x="910.20" y="141.30" font-size="11.5" fill="#eceef0" textLength="43.00" lengthAdjust="spacingAndGlyphs" >Settings</text>
<rect x="904.80" y="152.20" width="68.20" height="40.10" fill="#20272e" />
<text x="910.20" y="169.40" font-size="11.5" fill="#eceef0" textLength="19.40" lengthAdjust="spacingAndGlyphs" >Use</text>
<text x="910.20" y="183.80" font-size="11.5" fill="#eceef0" textLength="17.60" lengthAdjust="spacingAndGlyphs" >Cal</text>
<rect x="904.80" y="194.70" width="68.20" height="38.80" fill="#3e4d5b" />
<text x="910.20" y="211.90" font-size="11.5" fill="#eceef0" textLength="36.50" lengthAdjust="spacingAndGlyphs" >METAS</text>
<text x="910.20" y="226.30" font-size="11.5" fill="#eceef0" textLength="17.60" lengthAdjust="spacingAndGlyphs" >Cal</text>
<rect x="904.80" y="64.50" width="68.20" height="2.30" fill="#07090b" />
<rect x="904.80" y="107.30" width="68.20" height="2.30" fill="#07090b" />
<rect x="904.80" y="149.80" width="68.20" height="2.30" fill="#07090b" />
<rect x="904.80" y="192.30" width="68.20" height="2.30" fill="#07090b" />
<rect x="904.80" y="233.50" width="68.20" height="2.30" fill="#07090b" />
<rect x="904.80" y="235.80" width="68.20" height="340.20" fill="#20272e" />
<circle cx="412.3" cy="177.80" r="0.85" fill="#2c2c48"/>
<circle cx="412.3" cy="180.55" r="0.85" fill="#2c2c48"/>
<circle cx="412.3" cy="183.30" r="0.85" fill="#2c2c48"/>
<circle cx="412.3" cy="186.05" r="0.85" fill="#2c2c48"/>
<circle cx="412.3" cy="188.80" r="0.85" fill="#2c2c48"/>
<circle cx="412.3" cy="191.55" r="0.85" fill="#2c2c48"/>
<circle cx="412.3" cy="194.30" r="0.85" fill="#2c2c48"/>
<circle cx="412.3" cy="197.05" r="0.85" fill="#2c2c48"/>
<circle cx="412.3" cy="199.80" r="0.85" fill="#2c2c48"/>
<circle cx="412.3" cy="202.55" r="0.85" fill="#2c2c48"/>
<circle cx="412.3" cy="436.80" r="0.85" fill="#2c2c48"/>
<circle cx="412.3" cy="439.55" r="0.85" fill="#2c2c48"/>
<circle cx="412.3" cy="442.30" r="0.85" fill="#2c2c48"/>
<circle cx="412.3" cy="445.05" r="0.85" fill="#2c2c48"/>
<circle cx="412.3" cy="447.80" r="0.85" fill="#2c2c48"/>
<circle cx="412.3" cy="450.55" r="0.85" fill="#2c2c48"/>
<circle cx="412.3" cy="453.30" r="0.85" fill="#2c2c48"/>
<circle cx="412.3" cy="456.05" r="0.85" fill="#2c2c48"/>
<circle cx="412.3" cy="458.80" r="0.85" fill="#2c2c48"/>
<circle cx="412.3" cy="461.55" r="0.85" fill="#2c2c48"/>
<circle cx="398.80" cy="320.4" r="0.85" fill="#2c2c48"/>
<circle cx="401.55" cy="320.4" r="0.85" fill="#2c2c48"/>
<circle cx="404.30" cy="320.4" r="0.85" fill="#2c2c48"/>
<circle cx="407.05" cy="320.4" r="0.85" fill="#2c2c48"/>
<circle cx="409.80" cy="320.4" r="0.85" fill="#2c2c48"/>
<circle cx="412.55" cy="320.4" r="0.85" fill="#2c2c48"/>
<circle cx="415.30" cy="320.4" r="0.85" fill="#2c2c48"/>
<circle cx="418.05" cy="320.4" r="0.85" fill="#2c2c48"/>
<circle cx="420.80" cy="320.4" r="0.85" fill="#2c2c48"/>
<circle cx="423.55" cy="320.4" r="0.85" fill="#2c2c48"/>
<line x1="486.50" y1="186.50" x2="486.50" y2="195.00" stroke="#2a7a48" stroke-width="1" />
<line x1="122.60" y1="447.00" x2="122.60" y2="455.00" stroke="#3a3aa0" stroke-width="1" />
<line x1="486.30" y1="468.00" x2="486.30" y2="475.00" stroke="#9a40b0" stroke-width="1" />
</svg>
</body></html>
